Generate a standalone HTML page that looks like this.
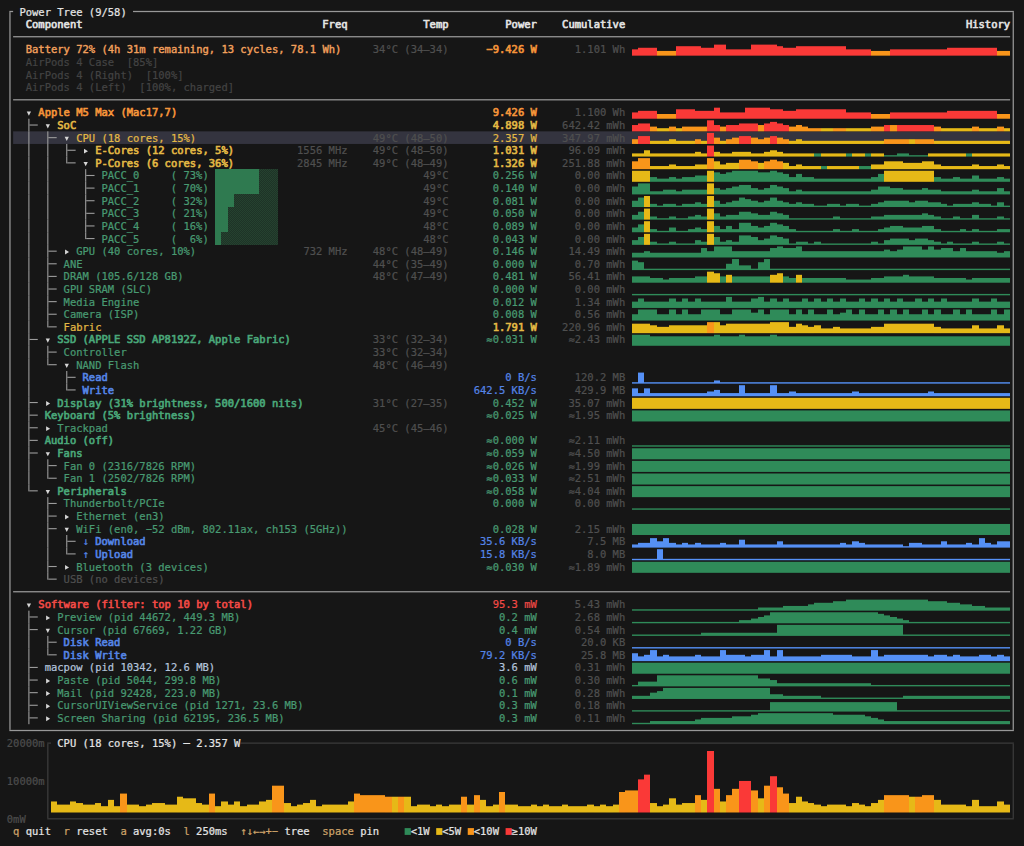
<!DOCTYPE html>
<html><head><meta charset="utf-8"><title>macpow</title>
<style>
html,body{margin:0;padding:0;background:#161616;}
body{width:1024px;height:846px;position:relative;overflow:hidden;
font-family:"DejaVu Sans Mono","Liberation Mono",monospace;font-size:10.49px;line-height:12.614px;}
svg{position:absolute;left:0;top:0;}
#t span{position:absolute;white-space:pre;height:12.614px;-webkit-text-stroke:0.22px currentColor;}
#t span.b{-webkit-text-stroke:0.62px currentColor;}
</style></head><body>
<svg width="1024" height="846" viewBox="0 0 1024 846">
<defs><pattern id="dz" width="2" height="2" patternUnits="userSpaceOnUse"><rect width="2" height="2" fill="#1e3327"/><rect width="1" height="1" fill="#25422f"/><rect x="1" y="1" width="1" height="1" fill="#25422f"/></pattern></defs>
<g>
<rect x="13.12" y="131.34" width="996.98" height="12.61" fill="#34343f"/>
<rect x="215.00" y="169.00" width="44.00" height="13.00" fill="#2f7a50"/>
<rect x="259.00" y="169.00" width="19.00" height="13.00" fill="url(#dz)"/>
<rect x="215.00" y="182.00" width="44.00" height="12.00" fill="#2f7a50"/>
<rect x="259.00" y="182.00" width="19.00" height="12.00" fill="url(#dz)"/>
<rect x="215.00" y="194.00" width="19.00" height="13.00" fill="#2f7a50"/>
<rect x="234.00" y="194.00" width="44.00" height="13.00" fill="url(#dz)"/>
<rect x="215.00" y="207.00" width="13.00" height="13.00" fill="#2f7a50"/>
<rect x="228.00" y="207.00" width="50.00" height="13.00" fill="url(#dz)"/>
<rect x="215.00" y="220.00" width="13.00" height="12.00" fill="#2f7a50"/>
<rect x="228.00" y="220.00" width="50.00" height="12.00" fill="url(#dz)"/>
<rect x="215.00" y="232.00" width="6.00" height="13.00" fill="#2f7a50"/>
<rect x="221.00" y="232.00" width="57.00" height="13.00" fill="url(#dz)"/>
<rect x="632.00" y="49.35" width="6.00" height="6.31" fill="#fa3937"/>
<rect x="638.00" y="47.77" width="19.00" height="7.88" fill="#fa3937"/>
<rect x="657.00" y="50.93" width="19.00" height="4.73" fill="#f9951a"/>
<rect x="676.00" y="46.20" width="25.00" height="9.46" fill="#fa3937"/>
<rect x="701.00" y="47.77" width="13.00" height="7.88" fill="#fa3937"/>
<rect x="714.00" y="44.62" width="12.00" height="11.04" fill="#fa3937"/>
<rect x="726.00" y="49.35" width="25.00" height="6.31" fill="#fa3937"/>
<rect x="751.00" y="44.62" width="26.00" height="11.04" fill="#fa3937"/>
<rect x="777.00" y="46.20" width="6.00" height="9.46" fill="#fa3937"/>
<rect x="783.00" y="47.77" width="13.00" height="7.88" fill="#fa3937"/>
<rect x="796.00" y="46.20" width="50.00" height="9.46" fill="#fa3937"/>
<rect x="846.00" y="49.35" width="25.00" height="6.31" fill="#fa3937"/>
<rect x="871.00" y="50.93" width="19.00" height="4.73" fill="#f9951a"/>
<rect x="890.00" y="49.35" width="57.00" height="6.31" fill="#fa3937"/>
<rect x="947.00" y="47.77" width="50.00" height="7.88" fill="#fa3937"/>
<rect x="997.00" y="50.93" width="13.00" height="4.73" fill="#f9951a"/>
<rect x="632.00" y="112.42" width="6.00" height="6.31" fill="#fa3937"/>
<rect x="638.00" y="110.84" width="19.00" height="7.88" fill="#fa3937"/>
<rect x="657.00" y="114.00" width="19.00" height="4.73" fill="#f9951a"/>
<rect x="676.00" y="109.27" width="19.00" height="9.46" fill="#fa3937"/>
<rect x="695.00" y="110.84" width="19.00" height="7.88" fill="#fa3937"/>
<rect x="714.00" y="107.69" width="6.00" height="11.04" fill="#fa3937"/>
<rect x="720.00" y="112.42" width="25.00" height="6.31" fill="#fa3937"/>
<rect x="745.00" y="107.69" width="25.00" height="11.04" fill="#fa3937"/>
<rect x="770.00" y="109.27" width="13.00" height="9.46" fill="#fa3937"/>
<rect x="783.00" y="110.84" width="13.00" height="7.88" fill="#fa3937"/>
<rect x="796.00" y="109.27" width="50.00" height="9.46" fill="#fa3937"/>
<rect x="846.00" y="112.42" width="25.00" height="6.31" fill="#fa3937"/>
<rect x="871.00" y="114.00" width="19.00" height="4.73" fill="#f9951a"/>
<rect x="890.00" y="112.42" width="57.00" height="6.31" fill="#fa3937"/>
<rect x="947.00" y="110.84" width="50.00" height="7.88" fill="#fa3937"/>
<rect x="997.00" y="114.00" width="13.00" height="4.73" fill="#f9951a"/>
<rect x="632.00" y="125.03" width="6.00" height="6.31" fill="#fa3937"/>
<rect x="638.00" y="123.46" width="12.00" height="7.88" fill="#fa3937"/>
<rect x="650.00" y="126.61" width="7.00" height="4.73" fill="#f9951a"/>
<rect x="657.00" y="128.19" width="12.00" height="3.15" fill="#e6b917"/>
<rect x="669.00" y="126.61" width="7.00" height="4.73" fill="#f9951a"/>
<rect x="676.00" y="128.19" width="6.00" height="3.15" fill="#e6b917"/>
<rect x="682.00" y="126.61" width="25.00" height="4.73" fill="#f9951a"/>
<rect x="707.00" y="120.30" width="7.00" height="11.04" fill="#fa3937"/>
<rect x="714.00" y="125.03" width="6.00" height="6.31" fill="#fa3937"/>
<rect x="720.00" y="126.61" width="6.00" height="4.73" fill="#f9951a"/>
<rect x="726.00" y="125.03" width="13.00" height="6.31" fill="#fa3937"/>
<rect x="739.00" y="123.46" width="19.00" height="7.88" fill="#fa3937"/>
<rect x="758.00" y="125.03" width="6.00" height="6.31" fill="#f9951a"/>
<rect x="764.00" y="123.46" width="6.00" height="7.88" fill="#fa3937"/>
<rect x="770.00" y="121.88" width="7.00" height="9.46" fill="#fa3937"/>
<rect x="777.00" y="123.46" width="6.00" height="7.88" fill="#fa3937"/>
<rect x="783.00" y="125.03" width="6.00" height="6.31" fill="#fa3937"/>
<rect x="789.00" y="126.61" width="7.00" height="4.73" fill="#f9951a"/>
<rect x="796.00" y="125.03" width="6.00" height="6.31" fill="#f9951a"/>
<rect x="802.00" y="126.61" width="6.00" height="4.73" fill="#f9951a"/>
<rect x="808.00" y="128.19" width="13.00" height="3.15" fill="#f9951a"/>
<rect x="821.00" y="128.19" width="12.00" height="3.15" fill="#e6b917"/>
<rect x="833.00" y="128.19" width="13.00" height="3.15" fill="#f9951a"/>
<rect x="846.00" y="128.19" width="25.00" height="3.15" fill="#e6b917"/>
<rect x="871.00" y="126.61" width="13.00" height="4.73" fill="#f9951a"/>
<rect x="884.00" y="125.03" width="6.00" height="6.31" fill="#fa3937"/>
<rect x="890.00" y="125.03" width="7.00" height="6.31" fill="#f9951a"/>
<rect x="897.00" y="125.03" width="37.00" height="6.31" fill="#fa3937"/>
<rect x="934.00" y="126.61" width="7.00" height="4.73" fill="#f9951a"/>
<rect x="941.00" y="128.19" width="31.00" height="3.15" fill="#e6b917"/>
<rect x="972.00" y="126.61" width="7.00" height="4.73" fill="#f9951a"/>
<rect x="979.00" y="128.19" width="18.00" height="3.15" fill="#e6b917"/>
<rect x="997.00" y="126.61" width="7.00" height="4.73" fill="#f9951a"/>
<rect x="1004.00" y="128.19" width="6.00" height="3.15" fill="#e6b917"/>
<rect x="632.00" y="139.22" width="6.00" height="4.73" fill="#f9951a"/>
<rect x="638.00" y="136.07" width="12.00" height="7.88" fill="#fa3937"/>
<rect x="650.00" y="140.80" width="19.00" height="3.15" fill="#e6b917"/>
<rect x="669.00" y="139.22" width="7.00" height="4.73" fill="#e6b917"/>
<rect x="676.00" y="140.80" width="19.00" height="3.15" fill="#e6b917"/>
<rect x="695.00" y="139.22" width="6.00" height="4.73" fill="#f9951a"/>
<rect x="701.00" y="140.80" width="6.00" height="3.15" fill="#e6b917"/>
<rect x="707.00" y="132.92" width="7.00" height="11.04" fill="#fa3937"/>
<rect x="714.00" y="137.65" width="6.00" height="6.31" fill="#f9951a"/>
<rect x="720.00" y="140.80" width="6.00" height="3.15" fill="#e6b917"/>
<rect x="726.00" y="139.22" width="6.00" height="4.73" fill="#f9951a"/>
<rect x="732.00" y="137.65" width="7.00" height="6.31" fill="#f9951a"/>
<rect x="739.00" y="136.07" width="12.00" height="7.88" fill="#fa3937"/>
<rect x="751.00" y="137.65" width="7.00" height="6.31" fill="#f9951a"/>
<rect x="758.00" y="139.22" width="6.00" height="4.73" fill="#f9951a"/>
<rect x="764.00" y="137.65" width="6.00" height="6.31" fill="#f9951a"/>
<rect x="770.00" y="136.07" width="7.00" height="7.88" fill="#fa3937"/>
<rect x="777.00" y="137.65" width="6.00" height="6.31" fill="#f9951a"/>
<rect x="783.00" y="139.22" width="6.00" height="4.73" fill="#f9951a"/>
<rect x="789.00" y="140.80" width="7.00" height="3.15" fill="#e6b917"/>
<rect x="796.00" y="139.22" width="6.00" height="4.73" fill="#e6b917"/>
<rect x="802.00" y="140.80" width="82.00" height="3.15" fill="#e6b917"/>
<rect x="884.00" y="139.22" width="25.00" height="4.73" fill="#f9951a"/>
<rect x="909.00" y="139.22" width="6.00" height="4.73" fill="#e6b917"/>
<rect x="915.00" y="139.22" width="19.00" height="4.73" fill="#f9951a"/>
<rect x="934.00" y="140.80" width="76.00" height="3.15" fill="#e6b917"/>
<rect x="632.00" y="153.41" width="12.00" height="3.15" fill="#e6b917"/>
<rect x="644.00" y="150.26" width="6.00" height="6.31" fill="#e6b917"/>
<rect x="650.00" y="153.41" width="45.00" height="3.15" fill="#e6b917"/>
<rect x="695.00" y="151.84" width="6.00" height="4.73" fill="#e6b917"/>
<rect x="701.00" y="153.41" width="6.00" height="3.15" fill="#e6b917"/>
<rect x="707.00" y="145.53" width="7.00" height="11.04" fill="#fa3937"/>
<rect x="714.00" y="151.84" width="6.00" height="4.73" fill="#e6b917"/>
<rect x="720.00" y="153.41" width="12.00" height="3.15" fill="#e6b917"/>
<rect x="732.00" y="151.84" width="19.00" height="4.73" fill="#e6b917"/>
<rect x="751.00" y="153.41" width="13.00" height="3.15" fill="#e6b917"/>
<rect x="764.00" y="151.84" width="6.00" height="4.73" fill="#e6b917"/>
<rect x="770.00" y="150.26" width="7.00" height="6.31" fill="#e6b917"/>
<rect x="777.00" y="151.84" width="6.00" height="4.73" fill="#e6b917"/>
<rect x="783.00" y="153.41" width="31.00" height="3.15" fill="#e6b917"/>
<rect x="814.00" y="153.41" width="7.00" height="3.15" fill="#2f8b59"/>
<rect x="821.00" y="153.41" width="25.00" height="3.15" fill="#e6b917"/>
<rect x="846.00" y="153.41" width="6.00" height="3.15" fill="#2f8b59"/>
<rect x="852.00" y="153.41" width="13.00" height="3.15" fill="#e6b917"/>
<rect x="865.00" y="153.41" width="6.00" height="3.15" fill="#2f8b59"/>
<rect x="871.00" y="153.41" width="13.00" height="3.15" fill="#e6b917"/>
<rect x="884.00" y="155.17" width="13.00" height="1.40" fill="#2f8b59"/>
<rect x="897.00" y="153.41" width="12.00" height="3.15" fill="#2f8b59"/>
<rect x="909.00" y="155.17" width="19.00" height="1.40" fill="#2f8b59"/>
<rect x="928.00" y="153.41" width="38.00" height="3.15" fill="#e6b917"/>
<rect x="966.00" y="153.41" width="6.00" height="3.15" fill="#2f8b59"/>
<rect x="972.00" y="153.41" width="38.00" height="3.15" fill="#e6b917"/>
<rect x="632.00" y="161.30" width="6.00" height="7.88" fill="#f9951a"/>
<rect x="638.00" y="158.14" width="12.00" height="11.04" fill="#f9951a"/>
<rect x="650.00" y="166.03" width="19.00" height="3.15" fill="#e6b917"/>
<rect x="669.00" y="164.45" width="7.00" height="4.73" fill="#e6b917"/>
<rect x="676.00" y="166.03" width="19.00" height="3.15" fill="#e6b917"/>
<rect x="695.00" y="164.45" width="12.00" height="4.73" fill="#e6b917"/>
<rect x="707.00" y="158.14" width="7.00" height="11.04" fill="#f9951a"/>
<rect x="714.00" y="161.30" width="6.00" height="7.88" fill="#e6b917"/>
<rect x="720.00" y="164.45" width="6.00" height="4.73" fill="#e6b917"/>
<rect x="726.00" y="162.88" width="13.00" height="6.31" fill="#e6b917"/>
<rect x="739.00" y="159.72" width="12.00" height="9.46" fill="#f9951a"/>
<rect x="751.00" y="161.30" width="7.00" height="7.88" fill="#f9951a"/>
<rect x="758.00" y="162.88" width="6.00" height="6.31" fill="#e6b917"/>
<rect x="764.00" y="161.30" width="6.00" height="7.88" fill="#f9951a"/>
<rect x="770.00" y="159.72" width="7.00" height="9.46" fill="#f9951a"/>
<rect x="777.00" y="161.30" width="6.00" height="7.88" fill="#f9951a"/>
<rect x="783.00" y="162.88" width="6.00" height="6.31" fill="#e6b917"/>
<rect x="789.00" y="166.03" width="7.00" height="3.15" fill="#e6b917"/>
<rect x="796.00" y="164.45" width="6.00" height="4.73" fill="#e6b917"/>
<rect x="802.00" y="166.03" width="19.00" height="3.15" fill="#e6b917"/>
<rect x="821.00" y="166.03" width="6.00" height="3.15" fill="#2f8b59"/>
<rect x="827.00" y="166.03" width="32.00" height="3.15" fill="#e6b917"/>
<rect x="859.00" y="166.03" width="12.00" height="3.15" fill="#2f8b59"/>
<rect x="871.00" y="164.45" width="13.00" height="4.73" fill="#e6b917"/>
<rect x="884.00" y="161.30" width="19.00" height="7.88" fill="#e6b917"/>
<rect x="903.00" y="162.88" width="19.00" height="6.31" fill="#e6b917"/>
<rect x="922.00" y="161.30" width="12.00" height="7.88" fill="#e6b917"/>
<rect x="934.00" y="164.45" width="7.00" height="4.73" fill="#e6b917"/>
<rect x="941.00" y="166.03" width="31.00" height="3.15" fill="#e6b917"/>
<rect x="972.00" y="164.45" width="7.00" height="4.73" fill="#e6b917"/>
<rect x="979.00" y="166.03" width="18.00" height="3.15" fill="#e6b917"/>
<rect x="997.00" y="164.45" width="7.00" height="4.73" fill="#e6b917"/>
<rect x="1004.00" y="166.03" width="6.00" height="3.15" fill="#e6b917"/>
<rect x="632.00" y="170.76" width="18.00" height="11.04" fill="#e6b917"/>
<rect x="650.00" y="177.07" width="7.00" height="4.73" fill="#2f8b59"/>
<rect x="657.00" y="178.64" width="12.00" height="3.15" fill="#2f8b59"/>
<rect x="669.00" y="177.07" width="7.00" height="4.73" fill="#2f8b59"/>
<rect x="676.00" y="178.64" width="6.00" height="3.15" fill="#2f8b59"/>
<rect x="682.00" y="177.07" width="13.00" height="4.73" fill="#2f8b59"/>
<rect x="695.00" y="175.49" width="12.00" height="6.31" fill="#2f8b59"/>
<rect x="707.00" y="170.76" width="7.00" height="11.04" fill="#e6b917"/>
<rect x="714.00" y="172.34" width="6.00" height="9.46" fill="#2f8b59"/>
<rect x="720.00" y="173.91" width="6.00" height="7.88" fill="#2f8b59"/>
<rect x="726.00" y="172.34" width="6.00" height="9.46" fill="#2f8b59"/>
<rect x="732.00" y="170.76" width="26.00" height="11.04" fill="#2f8b59"/>
<rect x="758.00" y="172.34" width="12.00" height="9.46" fill="#2f8b59"/>
<rect x="770.00" y="170.76" width="7.00" height="11.04" fill="#2f8b59"/>
<rect x="777.00" y="172.34" width="6.00" height="9.46" fill="#2f8b59"/>
<rect x="783.00" y="173.91" width="6.00" height="7.88" fill="#2f8b59"/>
<rect x="789.00" y="177.07" width="7.00" height="4.73" fill="#2f8b59"/>
<rect x="796.00" y="173.91" width="6.00" height="7.88" fill="#2f8b59"/>
<rect x="802.00" y="177.07" width="12.00" height="4.73" fill="#2f8b59"/>
<rect x="814.00" y="178.64" width="57.00" height="3.15" fill="#2f8b59"/>
<rect x="871.00" y="177.07" width="7.00" height="4.73" fill="#2f8b59"/>
<rect x="878.00" y="173.91" width="6.00" height="7.88" fill="#2f8b59"/>
<rect x="884.00" y="170.76" width="50.00" height="11.04" fill="#e6b917"/>
<rect x="934.00" y="177.07" width="7.00" height="4.73" fill="#2f8b59"/>
<rect x="941.00" y="178.64" width="12.00" height="3.15" fill="#2f8b59"/>
<rect x="953.00" y="177.07" width="7.00" height="4.73" fill="#2f8b59"/>
<rect x="960.00" y="178.64" width="12.00" height="3.15" fill="#2f8b59"/>
<rect x="972.00" y="175.49" width="7.00" height="6.31" fill="#2f8b59"/>
<rect x="979.00" y="178.64" width="18.00" height="3.15" fill="#2f8b59"/>
<rect x="997.00" y="177.07" width="7.00" height="4.73" fill="#2f8b59"/>
<rect x="1004.00" y="178.64" width="6.00" height="3.15" fill="#2f8b59"/>
<rect x="632.00" y="186.53" width="6.00" height="7.88" fill="#2f8b59"/>
<rect x="638.00" y="183.37" width="12.00" height="11.04" fill="#2f8b59"/>
<rect x="650.00" y="191.26" width="13.00" height="3.15" fill="#2f8b59"/>
<rect x="663.00" y="189.68" width="13.00" height="4.73" fill="#2f8b59"/>
<rect x="676.00" y="191.26" width="6.00" height="3.15" fill="#2f8b59"/>
<rect x="682.00" y="189.68" width="25.00" height="4.73" fill="#2f8b59"/>
<rect x="707.00" y="183.37" width="7.00" height="11.04" fill="#e6b917"/>
<rect x="714.00" y="188.10" width="6.00" height="6.31" fill="#2f8b59"/>
<rect x="720.00" y="189.68" width="6.00" height="4.73" fill="#2f8b59"/>
<rect x="726.00" y="188.10" width="6.00" height="6.31" fill="#2f8b59"/>
<rect x="732.00" y="186.53" width="7.00" height="7.88" fill="#2f8b59"/>
<rect x="739.00" y="184.95" width="12.00" height="9.46" fill="#2f8b59"/>
<rect x="751.00" y="188.10" width="7.00" height="6.31" fill="#2f8b59"/>
<rect x="758.00" y="189.68" width="6.00" height="4.73" fill="#2f8b59"/>
<rect x="764.00" y="188.10" width="6.00" height="6.31" fill="#2f8b59"/>
<rect x="770.00" y="184.95" width="7.00" height="9.46" fill="#2f8b59"/>
<rect x="777.00" y="186.53" width="6.00" height="7.88" fill="#2f8b59"/>
<rect x="783.00" y="188.10" width="6.00" height="6.31" fill="#2f8b59"/>
<rect x="789.00" y="191.26" width="7.00" height="3.15" fill="#2f8b59"/>
<rect x="796.00" y="189.68" width="6.00" height="4.73" fill="#2f8b59"/>
<rect x="802.00" y="191.26" width="69.00" height="3.15" fill="#2f8b59"/>
<rect x="871.00" y="189.68" width="7.00" height="4.73" fill="#2f8b59"/>
<rect x="878.00" y="186.53" width="12.00" height="7.88" fill="#2f8b59"/>
<rect x="890.00" y="188.10" width="13.00" height="6.31" fill="#2f8b59"/>
<rect x="903.00" y="189.68" width="19.00" height="4.73" fill="#2f8b59"/>
<rect x="922.00" y="188.10" width="6.00" height="6.31" fill="#2f8b59"/>
<rect x="928.00" y="189.68" width="13.00" height="4.73" fill="#2f8b59"/>
<rect x="941.00" y="191.26" width="31.00" height="3.15" fill="#2f8b59"/>
<rect x="972.00" y="189.68" width="7.00" height="4.73" fill="#2f8b59"/>
<rect x="979.00" y="191.26" width="18.00" height="3.15" fill="#2f8b59"/>
<rect x="997.00" y="188.10" width="7.00" height="6.31" fill="#2f8b59"/>
<rect x="1004.00" y="191.26" width="6.00" height="3.15" fill="#2f8b59"/>
<rect x="632.00" y="200.72" width="6.00" height="6.31" fill="#2f8b59"/>
<rect x="638.00" y="197.56" width="6.00" height="9.46" fill="#2f8b59"/>
<rect x="644.00" y="195.99" width="6.00" height="11.04" fill="#e6b917"/>
<rect x="650.00" y="203.87" width="7.00" height="3.15" fill="#2f8b59"/>
<rect x="657.00" y="205.62" width="6.00" height="1.40" fill="#2f8b59"/>
<rect x="663.00" y="203.87" width="13.00" height="3.15" fill="#2f8b59"/>
<rect x="676.00" y="205.62" width="6.00" height="1.40" fill="#2f8b59"/>
<rect x="682.00" y="203.87" width="13.00" height="3.15" fill="#2f8b59"/>
<rect x="695.00" y="202.29" width="6.00" height="4.73" fill="#2f8b59"/>
<rect x="701.00" y="203.87" width="6.00" height="3.15" fill="#2f8b59"/>
<rect x="707.00" y="195.99" width="7.00" height="11.04" fill="#e6b917"/>
<rect x="714.00" y="200.72" width="6.00" height="6.31" fill="#2f8b59"/>
<rect x="720.00" y="203.87" width="6.00" height="3.15" fill="#2f8b59"/>
<rect x="726.00" y="202.29" width="6.00" height="4.73" fill="#2f8b59"/>
<rect x="732.00" y="200.72" width="7.00" height="6.31" fill="#2f8b59"/>
<rect x="739.00" y="197.56" width="6.00" height="9.46" fill="#2f8b59"/>
<rect x="745.00" y="199.14" width="6.00" height="7.88" fill="#2f8b59"/>
<rect x="751.00" y="200.72" width="7.00" height="6.31" fill="#2f8b59"/>
<rect x="758.00" y="202.29" width="6.00" height="4.73" fill="#2f8b59"/>
<rect x="764.00" y="200.72" width="6.00" height="6.31" fill="#2f8b59"/>
<rect x="770.00" y="197.56" width="7.00" height="9.46" fill="#2f8b59"/>
<rect x="777.00" y="200.72" width="6.00" height="6.31" fill="#2f8b59"/>
<rect x="783.00" y="202.29" width="6.00" height="4.73" fill="#2f8b59"/>
<rect x="789.00" y="203.87" width="7.00" height="3.15" fill="#2f8b59"/>
<rect x="796.00" y="202.29" width="6.00" height="4.73" fill="#2f8b59"/>
<rect x="802.00" y="203.87" width="12.00" height="3.15" fill="#2f8b59"/>
<rect x="814.00" y="205.62" width="13.00" height="1.40" fill="#2f8b59"/>
<rect x="827.00" y="203.87" width="13.00" height="3.15" fill="#2f8b59"/>
<rect x="840.00" y="205.62" width="6.00" height="1.40" fill="#2f8b59"/>
<rect x="846.00" y="203.87" width="13.00" height="3.15" fill="#2f8b59"/>
<rect x="859.00" y="205.62" width="12.00" height="1.40" fill="#2f8b59"/>
<rect x="871.00" y="203.87" width="7.00" height="3.15" fill="#2f8b59"/>
<rect x="878.00" y="202.29" width="6.00" height="4.73" fill="#2f8b59"/>
<rect x="884.00" y="200.72" width="25.00" height="6.31" fill="#2f8b59"/>
<rect x="909.00" y="202.29" width="6.00" height="4.73" fill="#2f8b59"/>
<rect x="915.00" y="200.72" width="13.00" height="6.31" fill="#2f8b59"/>
<rect x="928.00" y="202.29" width="13.00" height="4.73" fill="#2f8b59"/>
<rect x="941.00" y="203.87" width="6.00" height="3.15" fill="#2f8b59"/>
<rect x="947.00" y="205.62" width="6.00" height="1.40" fill="#2f8b59"/>
<rect x="953.00" y="203.87" width="19.00" height="3.15" fill="#2f8b59"/>
<rect x="972.00" y="202.29" width="7.00" height="4.73" fill="#2f8b59"/>
<rect x="979.00" y="203.87" width="12.00" height="3.15" fill="#2f8b59"/>
<rect x="991.00" y="205.62" width="6.00" height="1.40" fill="#2f8b59"/>
<rect x="997.00" y="202.29" width="7.00" height="4.73" fill="#2f8b59"/>
<rect x="1004.00" y="205.62" width="6.00" height="1.40" fill="#2f8b59"/>
<rect x="632.00" y="214.91" width="6.00" height="4.73" fill="#2f8b59"/>
<rect x="638.00" y="211.75" width="6.00" height="7.88" fill="#2f8b59"/>
<rect x="644.00" y="208.60" width="6.00" height="11.04" fill="#e6b917"/>
<rect x="650.00" y="216.48" width="7.00" height="3.15" fill="#2f8b59"/>
<rect x="657.00" y="218.24" width="12.00" height="1.40" fill="#2f8b59"/>
<rect x="669.00" y="216.48" width="7.00" height="3.15" fill="#2f8b59"/>
<rect x="676.00" y="218.24" width="12.00" height="1.40" fill="#2f8b59"/>
<rect x="688.00" y="216.48" width="7.00" height="3.15" fill="#2f8b59"/>
<rect x="695.00" y="214.91" width="6.00" height="4.73" fill="#2f8b59"/>
<rect x="701.00" y="216.48" width="6.00" height="3.15" fill="#2f8b59"/>
<rect x="707.00" y="208.60" width="7.00" height="11.04" fill="#e6b917"/>
<rect x="714.00" y="213.33" width="6.00" height="6.31" fill="#2f8b59"/>
<rect x="720.00" y="216.48" width="6.00" height="3.15" fill="#2f8b59"/>
<rect x="726.00" y="214.91" width="13.00" height="4.73" fill="#2f8b59"/>
<rect x="739.00" y="211.75" width="12.00" height="7.88" fill="#2f8b59"/>
<rect x="751.00" y="213.33" width="7.00" height="6.31" fill="#2f8b59"/>
<rect x="758.00" y="214.91" width="12.00" height="4.73" fill="#2f8b59"/>
<rect x="770.00" y="211.75" width="7.00" height="7.88" fill="#2f8b59"/>
<rect x="777.00" y="213.33" width="6.00" height="6.31" fill="#2f8b59"/>
<rect x="783.00" y="214.91" width="6.00" height="4.73" fill="#2f8b59"/>
<rect x="789.00" y="218.24" width="44.00" height="1.40" fill="#2f8b59"/>
<rect x="833.00" y="216.48" width="7.00" height="3.15" fill="#2f8b59"/>
<rect x="840.00" y="218.24" width="31.00" height="1.40" fill="#2f8b59"/>
<rect x="871.00" y="216.48" width="13.00" height="3.15" fill="#2f8b59"/>
<rect x="884.00" y="214.91" width="38.00" height="4.73" fill="#2f8b59"/>
<rect x="922.00" y="213.33" width="6.00" height="6.31" fill="#2f8b59"/>
<rect x="928.00" y="214.91" width="6.00" height="4.73" fill="#2f8b59"/>
<rect x="934.00" y="216.48" width="7.00" height="3.15" fill="#2f8b59"/>
<rect x="941.00" y="218.24" width="12.00" height="1.40" fill="#2f8b59"/>
<rect x="953.00" y="216.48" width="7.00" height="3.15" fill="#2f8b59"/>
<rect x="960.00" y="218.24" width="12.00" height="1.40" fill="#2f8b59"/>
<rect x="972.00" y="214.91" width="7.00" height="4.73" fill="#2f8b59"/>
<rect x="979.00" y="218.24" width="18.00" height="1.40" fill="#2f8b59"/>
<rect x="997.00" y="216.48" width="7.00" height="3.15" fill="#2f8b59"/>
<rect x="1004.00" y="218.24" width="6.00" height="1.40" fill="#2f8b59"/>
<rect x="632.00" y="227.52" width="6.00" height="4.73" fill="#2f8b59"/>
<rect x="638.00" y="224.37" width="6.00" height="7.88" fill="#2f8b59"/>
<rect x="644.00" y="221.21" width="6.00" height="11.04" fill="#e6b917"/>
<rect x="650.00" y="229.10" width="7.00" height="3.15" fill="#2f8b59"/>
<rect x="657.00" y="230.85" width="12.00" height="1.40" fill="#2f8b59"/>
<rect x="669.00" y="227.52" width="7.00" height="4.73" fill="#2f8b59"/>
<rect x="676.00" y="230.85" width="12.00" height="1.40" fill="#2f8b59"/>
<rect x="688.00" y="229.10" width="7.00" height="3.15" fill="#2f8b59"/>
<rect x="695.00" y="227.52" width="6.00" height="4.73" fill="#2f8b59"/>
<rect x="701.00" y="229.10" width="6.00" height="3.15" fill="#2f8b59"/>
<rect x="707.00" y="221.21" width="7.00" height="11.04" fill="#e6b917"/>
<rect x="714.00" y="225.95" width="6.00" height="6.31" fill="#2f8b59"/>
<rect x="720.00" y="229.10" width="6.00" height="3.15" fill="#2f8b59"/>
<rect x="726.00" y="225.95" width="6.00" height="6.31" fill="#2f8b59"/>
<rect x="732.00" y="229.10" width="7.00" height="3.15" fill="#2f8b59"/>
<rect x="739.00" y="222.79" width="12.00" height="9.46" fill="#2f8b59"/>
<rect x="751.00" y="225.95" width="7.00" height="6.31" fill="#2f8b59"/>
<rect x="758.00" y="227.52" width="6.00" height="4.73" fill="#2f8b59"/>
<rect x="764.00" y="225.95" width="6.00" height="6.31" fill="#2f8b59"/>
<rect x="770.00" y="222.79" width="7.00" height="9.46" fill="#2f8b59"/>
<rect x="777.00" y="224.37" width="6.00" height="7.88" fill="#2f8b59"/>
<rect x="783.00" y="225.95" width="6.00" height="6.31" fill="#2f8b59"/>
<rect x="789.00" y="229.10" width="7.00" height="3.15" fill="#2f8b59"/>
<rect x="796.00" y="230.85" width="37.00" height="1.40" fill="#2f8b59"/>
<rect x="833.00" y="229.10" width="7.00" height="3.15" fill="#2f8b59"/>
<rect x="840.00" y="230.85" width="12.00" height="1.40" fill="#2f8b59"/>
<rect x="852.00" y="229.10" width="7.00" height="3.15" fill="#2f8b59"/>
<rect x="859.00" y="230.85" width="19.00" height="1.40" fill="#2f8b59"/>
<rect x="878.00" y="229.10" width="6.00" height="3.15" fill="#2f8b59"/>
<rect x="884.00" y="227.52" width="6.00" height="4.73" fill="#2f8b59"/>
<rect x="890.00" y="225.95" width="13.00" height="6.31" fill="#2f8b59"/>
<rect x="903.00" y="227.52" width="19.00" height="4.73" fill="#2f8b59"/>
<rect x="922.00" y="225.95" width="12.00" height="6.31" fill="#2f8b59"/>
<rect x="934.00" y="229.10" width="7.00" height="3.15" fill="#2f8b59"/>
<rect x="941.00" y="230.85" width="19.00" height="1.40" fill="#2f8b59"/>
<rect x="960.00" y="229.10" width="6.00" height="3.15" fill="#2f8b59"/>
<rect x="966.00" y="230.85" width="6.00" height="1.40" fill="#2f8b59"/>
<rect x="972.00" y="229.10" width="7.00" height="3.15" fill="#2f8b59"/>
<rect x="979.00" y="230.85" width="18.00" height="1.40" fill="#2f8b59"/>
<rect x="997.00" y="229.10" width="13.00" height="3.15" fill="#2f8b59"/>
<rect x="632.00" y="240.14" width="6.00" height="4.73" fill="#2f8b59"/>
<rect x="638.00" y="236.98" width="6.00" height="7.88" fill="#2f8b59"/>
<rect x="644.00" y="233.83" width="6.00" height="11.04" fill="#e6b917"/>
<rect x="650.00" y="241.71" width="7.00" height="3.15" fill="#2f8b59"/>
<rect x="657.00" y="243.47" width="12.00" height="1.40" fill="#2f8b59"/>
<rect x="669.00" y="241.71" width="7.00" height="3.15" fill="#2f8b59"/>
<rect x="676.00" y="243.47" width="19.00" height="1.40" fill="#2f8b59"/>
<rect x="695.00" y="240.14" width="6.00" height="4.73" fill="#2f8b59"/>
<rect x="701.00" y="241.71" width="6.00" height="3.15" fill="#2f8b59"/>
<rect x="707.00" y="233.83" width="7.00" height="11.04" fill="#e6b917"/>
<rect x="714.00" y="236.98" width="6.00" height="7.88" fill="#2f8b59"/>
<rect x="720.00" y="241.71" width="6.00" height="3.15" fill="#2f8b59"/>
<rect x="726.00" y="240.14" width="6.00" height="4.73" fill="#2f8b59"/>
<rect x="732.00" y="241.71" width="7.00" height="3.15" fill="#2f8b59"/>
<rect x="739.00" y="235.41" width="12.00" height="9.46" fill="#2f8b59"/>
<rect x="751.00" y="236.98" width="7.00" height="7.88" fill="#2f8b59"/>
<rect x="758.00" y="240.14" width="6.00" height="4.73" fill="#2f8b59"/>
<rect x="764.00" y="238.56" width="6.00" height="6.31" fill="#2f8b59"/>
<rect x="770.00" y="235.41" width="7.00" height="9.46" fill="#2f8b59"/>
<rect x="777.00" y="236.98" width="6.00" height="7.88" fill="#2f8b59"/>
<rect x="783.00" y="238.56" width="6.00" height="6.31" fill="#2f8b59"/>
<rect x="789.00" y="243.47" width="7.00" height="1.40" fill="#2f8b59"/>
<rect x="796.00" y="241.71" width="12.00" height="3.15" fill="#2f8b59"/>
<rect x="808.00" y="243.47" width="6.00" height="1.40" fill="#2f8b59"/>
<rect x="814.00" y="241.71" width="7.00" height="3.15" fill="#2f8b59"/>
<rect x="821.00" y="243.47" width="50.00" height="1.40" fill="#2f8b59"/>
<rect x="871.00" y="241.71" width="7.00" height="3.15" fill="#2f8b59"/>
<rect x="878.00" y="243.47" width="6.00" height="1.40" fill="#2f8b59"/>
<rect x="884.00" y="240.14" width="6.00" height="4.73" fill="#2f8b59"/>
<rect x="890.00" y="238.56" width="19.00" height="6.31" fill="#2f8b59"/>
<rect x="909.00" y="240.14" width="6.00" height="4.73" fill="#2f8b59"/>
<rect x="915.00" y="238.56" width="13.00" height="6.31" fill="#2f8b59"/>
<rect x="928.00" y="240.14" width="6.00" height="4.73" fill="#2f8b59"/>
<rect x="934.00" y="241.71" width="7.00" height="3.15" fill="#2f8b59"/>
<rect x="941.00" y="243.47" width="6.00" height="1.40" fill="#2f8b59"/>
<rect x="947.00" y="241.71" width="6.00" height="3.15" fill="#2f8b59"/>
<rect x="953.00" y="243.47" width="19.00" height="1.40" fill="#2f8b59"/>
<rect x="972.00" y="241.71" width="7.00" height="3.15" fill="#2f8b59"/>
<rect x="979.00" y="243.47" width="18.00" height="1.40" fill="#2f8b59"/>
<rect x="997.00" y="241.71" width="7.00" height="3.15" fill="#2f8b59"/>
<rect x="1004.00" y="243.47" width="6.00" height="1.40" fill="#2f8b59"/>
<rect x="632.00" y="252.75" width="12.00" height="4.73" fill="#2f8b59"/>
<rect x="644.00" y="251.17" width="6.00" height="6.31" fill="#2f8b59"/>
<rect x="650.00" y="252.75" width="51.00" height="4.73" fill="#2f8b59"/>
<rect x="701.00" y="248.02" width="6.00" height="9.46" fill="#2f8b59"/>
<rect x="707.00" y="251.17" width="7.00" height="6.31" fill="#2f8b59"/>
<rect x="714.00" y="246.44" width="18.00" height="11.04" fill="#2f8b59"/>
<rect x="732.00" y="251.17" width="38.00" height="6.31" fill="#2f8b59"/>
<rect x="770.00" y="248.02" width="7.00" height="9.46" fill="#2f8b59"/>
<rect x="777.00" y="246.44" width="6.00" height="11.04" fill="#2f8b59"/>
<rect x="783.00" y="248.02" width="13.00" height="9.46" fill="#2f8b59"/>
<rect x="796.00" y="246.44" width="6.00" height="11.04" fill="#2f8b59"/>
<rect x="802.00" y="251.17" width="82.00" height="6.31" fill="#2f8b59"/>
<rect x="884.00" y="249.60" width="6.00" height="7.88" fill="#2f8b59"/>
<rect x="890.00" y="251.17" width="7.00" height="6.31" fill="#2f8b59"/>
<rect x="897.00" y="249.60" width="6.00" height="7.88" fill="#2f8b59"/>
<rect x="903.00" y="246.44" width="19.00" height="11.04" fill="#2f8b59"/>
<rect x="922.00" y="249.60" width="6.00" height="7.88" fill="#2f8b59"/>
<rect x="928.00" y="246.44" width="6.00" height="11.04" fill="#2f8b59"/>
<rect x="934.00" y="249.60" width="7.00" height="7.88" fill="#2f8b59"/>
<rect x="941.00" y="248.02" width="12.00" height="9.46" fill="#2f8b59"/>
<rect x="953.00" y="251.17" width="7.00" height="6.31" fill="#2f8b59"/>
<rect x="960.00" y="248.02" width="6.00" height="9.46" fill="#2f8b59"/>
<rect x="966.00" y="251.17" width="31.00" height="6.31" fill="#2f8b59"/>
<rect x="997.00" y="252.75" width="7.00" height="4.73" fill="#2f8b59"/>
<rect x="1004.00" y="251.17" width="6.00" height="6.31" fill="#2f8b59"/>
<rect x="632.00" y="260.63" width="6.00" height="9.46" fill="#2f8b59"/>
<rect x="638.00" y="262.21" width="6.00" height="7.88" fill="#2f8b59"/>
<rect x="644.00" y="268.69" width="82.00" height="1.40" fill="#2f8b59"/>
<rect x="726.00" y="263.79" width="6.00" height="6.31" fill="#2f8b59"/>
<rect x="732.00" y="259.06" width="7.00" height="11.04" fill="#2f8b59"/>
<rect x="739.00" y="265.36" width="12.00" height="4.73" fill="#2f8b59"/>
<rect x="751.00" y="268.69" width="7.00" height="1.40" fill="#2f8b59"/>
<rect x="758.00" y="262.21" width="6.00" height="7.88" fill="#2f8b59"/>
<rect x="764.00" y="259.06" width="6.00" height="11.04" fill="#2f8b59"/>
<rect x="770.00" y="268.69" width="240.00" height="1.40" fill="#2f8b59"/>
<rect x="632.00" y="276.40" width="18.00" height="6.31" fill="#2f8b59"/>
<rect x="650.00" y="277.98" width="13.00" height="4.73" fill="#2f8b59"/>
<rect x="663.00" y="279.55" width="6.00" height="3.15" fill="#2f8b59"/>
<rect x="669.00" y="277.98" width="26.00" height="4.73" fill="#2f8b59"/>
<rect x="695.00" y="276.40" width="12.00" height="6.31" fill="#2f8b59"/>
<rect x="707.00" y="271.67" width="7.00" height="11.04" fill="#e6b917"/>
<rect x="714.00" y="273.25" width="6.00" height="9.46" fill="#e6b917"/>
<rect x="720.00" y="276.40" width="6.00" height="6.31" fill="#2f8b59"/>
<rect x="726.00" y="274.82" width="6.00" height="7.88" fill="#e6b917"/>
<rect x="732.00" y="276.40" width="38.00" height="6.31" fill="#2f8b59"/>
<rect x="770.00" y="274.82" width="7.00" height="7.88" fill="#e6b917"/>
<rect x="777.00" y="273.25" width="6.00" height="9.46" fill="#e6b917"/>
<rect x="783.00" y="276.40" width="6.00" height="6.31" fill="#2f8b59"/>
<rect x="789.00" y="277.98" width="7.00" height="4.73" fill="#2f8b59"/>
<rect x="796.00" y="274.82" width="6.00" height="7.88" fill="#e6b917"/>
<rect x="802.00" y="277.98" width="44.00" height="4.73" fill="#2f8b59"/>
<rect x="846.00" y="279.55" width="25.00" height="3.15" fill="#2f8b59"/>
<rect x="871.00" y="277.98" width="13.00" height="4.73" fill="#2f8b59"/>
<rect x="884.00" y="276.40" width="19.00" height="6.31" fill="#2f8b59"/>
<rect x="903.00" y="274.82" width="6.00" height="7.88" fill="#2f8b59"/>
<rect x="909.00" y="276.40" width="25.00" height="6.31" fill="#2f8b59"/>
<rect x="934.00" y="277.98" width="32.00" height="4.73" fill="#2f8b59"/>
<rect x="966.00" y="279.55" width="6.00" height="3.15" fill="#2f8b59"/>
<rect x="972.00" y="277.98" width="38.00" height="4.73" fill="#2f8b59"/>
<rect x="632.00" y="293.92" width="378.00" height="1.40" fill="#2f8b59"/>
<rect x="632.00" y="301.63" width="6.00" height="6.31" fill="#2f8b59"/>
<rect x="638.00" y="298.48" width="6.00" height="9.46" fill="#2f8b59"/>
<rect x="644.00" y="301.63" width="25.00" height="6.31" fill="#2f8b59"/>
<rect x="669.00" y="298.48" width="7.00" height="9.46" fill="#2f8b59"/>
<rect x="676.00" y="301.63" width="6.00" height="6.31" fill="#2f8b59"/>
<rect x="682.00" y="298.48" width="6.00" height="9.46" fill="#2f8b59"/>
<rect x="688.00" y="301.63" width="7.00" height="6.31" fill="#2f8b59"/>
<rect x="695.00" y="298.48" width="6.00" height="9.46" fill="#2f8b59"/>
<rect x="701.00" y="301.63" width="25.00" height="6.31" fill="#2f8b59"/>
<rect x="726.00" y="296.90" width="6.00" height="11.04" fill="#2f8b59"/>
<rect x="732.00" y="301.63" width="19.00" height="6.31" fill="#2f8b59"/>
<rect x="751.00" y="298.48" width="7.00" height="9.46" fill="#2f8b59"/>
<rect x="758.00" y="296.90" width="6.00" height="11.04" fill="#2f8b59"/>
<rect x="764.00" y="301.63" width="6.00" height="6.31" fill="#2f8b59"/>
<rect x="770.00" y="298.48" width="7.00" height="9.46" fill="#2f8b59"/>
<rect x="777.00" y="301.63" width="6.00" height="6.31" fill="#2f8b59"/>
<rect x="783.00" y="298.48" width="6.00" height="9.46" fill="#2f8b59"/>
<rect x="789.00" y="301.63" width="13.00" height="6.31" fill="#2f8b59"/>
<rect x="802.00" y="298.48" width="6.00" height="9.46" fill="#2f8b59"/>
<rect x="808.00" y="301.63" width="6.00" height="6.31" fill="#2f8b59"/>
<rect x="814.00" y="298.48" width="7.00" height="9.46" fill="#2f8b59"/>
<rect x="821.00" y="301.63" width="6.00" height="6.31" fill="#2f8b59"/>
<rect x="827.00" y="298.48" width="6.00" height="9.46" fill="#2f8b59"/>
<rect x="833.00" y="301.63" width="7.00" height="6.31" fill="#2f8b59"/>
<rect x="840.00" y="298.48" width="6.00" height="9.46" fill="#2f8b59"/>
<rect x="846.00" y="301.63" width="13.00" height="6.31" fill="#2f8b59"/>
<rect x="859.00" y="298.48" width="6.00" height="9.46" fill="#2f8b59"/>
<rect x="865.00" y="301.63" width="6.00" height="6.31" fill="#2f8b59"/>
<rect x="871.00" y="298.48" width="7.00" height="9.46" fill="#2f8b59"/>
<rect x="878.00" y="301.63" width="6.00" height="6.31" fill="#2f8b59"/>
<rect x="884.00" y="298.48" width="6.00" height="9.46" fill="#2f8b59"/>
<rect x="890.00" y="301.63" width="7.00" height="6.31" fill="#2f8b59"/>
<rect x="897.00" y="298.48" width="6.00" height="9.46" fill="#2f8b59"/>
<rect x="903.00" y="301.63" width="12.00" height="6.31" fill="#2f8b59"/>
<rect x="915.00" y="298.48" width="7.00" height="9.46" fill="#2f8b59"/>
<rect x="922.00" y="301.63" width="6.00" height="6.31" fill="#2f8b59"/>
<rect x="928.00" y="298.48" width="6.00" height="9.46" fill="#2f8b59"/>
<rect x="934.00" y="301.63" width="7.00" height="6.31" fill="#2f8b59"/>
<rect x="941.00" y="298.48" width="6.00" height="9.46" fill="#2f8b59"/>
<rect x="947.00" y="301.63" width="25.00" height="6.31" fill="#2f8b59"/>
<rect x="972.00" y="298.48" width="7.00" height="9.46" fill="#2f8b59"/>
<rect x="979.00" y="301.63" width="12.00" height="6.31" fill="#2f8b59"/>
<rect x="991.00" y="298.48" width="6.00" height="9.46" fill="#2f8b59"/>
<rect x="997.00" y="301.63" width="13.00" height="6.31" fill="#2f8b59"/>
<rect x="632.00" y="314.24" width="6.00" height="6.31" fill="#2f8b59"/>
<rect x="638.00" y="309.51" width="19.00" height="11.04" fill="#2f8b59"/>
<rect x="657.00" y="314.24" width="12.00" height="6.31" fill="#2f8b59"/>
<rect x="669.00" y="309.51" width="7.00" height="11.04" fill="#2f8b59"/>
<rect x="676.00" y="314.24" width="6.00" height="6.31" fill="#2f8b59"/>
<rect x="682.00" y="309.51" width="6.00" height="11.04" fill="#2f8b59"/>
<rect x="688.00" y="314.24" width="13.00" height="6.31" fill="#2f8b59"/>
<rect x="701.00" y="309.51" width="19.00" height="11.04" fill="#2f8b59"/>
<rect x="720.00" y="314.24" width="12.00" height="6.31" fill="#2f8b59"/>
<rect x="732.00" y="309.51" width="19.00" height="11.04" fill="#2f8b59"/>
<rect x="751.00" y="312.67" width="7.00" height="7.88" fill="#2f8b59"/>
<rect x="758.00" y="309.51" width="6.00" height="11.04" fill="#2f8b59"/>
<rect x="764.00" y="314.24" width="6.00" height="6.31" fill="#2f8b59"/>
<rect x="770.00" y="309.51" width="19.00" height="11.04" fill="#2f8b59"/>
<rect x="789.00" y="314.24" width="7.00" height="6.31" fill="#2f8b59"/>
<rect x="796.00" y="309.51" width="6.00" height="11.04" fill="#2f8b59"/>
<rect x="802.00" y="314.24" width="6.00" height="6.31" fill="#2f8b59"/>
<rect x="808.00" y="309.51" width="6.00" height="11.04" fill="#2f8b59"/>
<rect x="814.00" y="314.24" width="13.00" height="6.31" fill="#2f8b59"/>
<rect x="827.00" y="309.51" width="6.00" height="11.04" fill="#2f8b59"/>
<rect x="833.00" y="314.24" width="7.00" height="6.31" fill="#2f8b59"/>
<rect x="840.00" y="312.67" width="6.00" height="7.88" fill="#2f8b59"/>
<rect x="846.00" y="309.51" width="6.00" height="11.04" fill="#2f8b59"/>
<rect x="852.00" y="314.24" width="7.00" height="6.31" fill="#2f8b59"/>
<rect x="859.00" y="309.51" width="6.00" height="11.04" fill="#2f8b59"/>
<rect x="865.00" y="314.24" width="13.00" height="6.31" fill="#2f8b59"/>
<rect x="878.00" y="309.51" width="6.00" height="11.04" fill="#2f8b59"/>
<rect x="884.00" y="314.24" width="6.00" height="6.31" fill="#2f8b59"/>
<rect x="890.00" y="309.51" width="7.00" height="11.04" fill="#2f8b59"/>
<rect x="897.00" y="314.24" width="6.00" height="6.31" fill="#2f8b59"/>
<rect x="903.00" y="309.51" width="6.00" height="11.04" fill="#2f8b59"/>
<rect x="909.00" y="314.24" width="13.00" height="6.31" fill="#2f8b59"/>
<rect x="922.00" y="309.51" width="6.00" height="11.04" fill="#2f8b59"/>
<rect x="928.00" y="314.24" width="6.00" height="6.31" fill="#2f8b59"/>
<rect x="934.00" y="309.51" width="7.00" height="11.04" fill="#2f8b59"/>
<rect x="941.00" y="314.24" width="12.00" height="6.31" fill="#2f8b59"/>
<rect x="953.00" y="309.51" width="7.00" height="11.04" fill="#2f8b59"/>
<rect x="960.00" y="314.24" width="6.00" height="6.31" fill="#2f8b59"/>
<rect x="966.00" y="309.51" width="6.00" height="11.04" fill="#2f8b59"/>
<rect x="972.00" y="314.24" width="19.00" height="6.31" fill="#2f8b59"/>
<rect x="991.00" y="309.51" width="6.00" height="11.04" fill="#2f8b59"/>
<rect x="997.00" y="314.24" width="7.00" height="6.31" fill="#2f8b59"/>
<rect x="1004.00" y="309.51" width="6.00" height="11.04" fill="#2f8b59"/>
<rect x="632.00" y="323.70" width="18.00" height="9.46" fill="#e6b917"/>
<rect x="650.00" y="325.28" width="7.00" height="7.88" fill="#e6b917"/>
<rect x="657.00" y="326.86" width="12.00" height="6.31" fill="#e6b917"/>
<rect x="669.00" y="325.28" width="38.00" height="7.88" fill="#e6b917"/>
<rect x="707.00" y="322.13" width="7.00" height="11.04" fill="#f9951a"/>
<rect x="714.00" y="322.13" width="6.00" height="11.04" fill="#e6b917"/>
<rect x="720.00" y="325.28" width="6.00" height="7.88" fill="#e6b917"/>
<rect x="726.00" y="323.70" width="44.00" height="9.46" fill="#e6b917"/>
<rect x="770.00" y="322.13" width="19.00" height="11.04" fill="#e6b917"/>
<rect x="789.00" y="326.86" width="7.00" height="6.31" fill="#e6b917"/>
<rect x="796.00" y="323.70" width="6.00" height="9.46" fill="#e6b917"/>
<rect x="802.00" y="325.28" width="6.00" height="7.88" fill="#e6b917"/>
<rect x="808.00" y="326.86" width="6.00" height="6.31" fill="#e6b917"/>
<rect x="814.00" y="325.28" width="7.00" height="7.88" fill="#e6b917"/>
<rect x="821.00" y="328.43" width="12.00" height="4.73" fill="#e6b917"/>
<rect x="833.00" y="326.86" width="7.00" height="6.31" fill="#e6b917"/>
<rect x="840.00" y="328.43" width="31.00" height="4.73" fill="#e6b917"/>
<rect x="871.00" y="326.86" width="13.00" height="6.31" fill="#e6b917"/>
<rect x="884.00" y="323.70" width="50.00" height="9.46" fill="#e6b917"/>
<rect x="934.00" y="326.86" width="7.00" height="6.31" fill="#e6b917"/>
<rect x="941.00" y="328.43" width="31.00" height="4.73" fill="#e6b917"/>
<rect x="972.00" y="325.28" width="7.00" height="7.88" fill="#e6b917"/>
<rect x="979.00" y="328.43" width="18.00" height="4.73" fill="#e6b917"/>
<rect x="997.00" y="325.28" width="7.00" height="7.88" fill="#e6b917"/>
<rect x="1004.00" y="328.43" width="6.00" height="4.73" fill="#e6b917"/>
<rect x="632.00" y="334.74" width="18.00" height="11.04" fill="#2f8b59"/>
<rect x="650.00" y="336.32" width="64.00" height="9.46" fill="#2f8b59"/>
<rect x="714.00" y="334.74" width="6.00" height="11.04" fill="#2f8b59"/>
<rect x="720.00" y="336.32" width="19.00" height="9.46" fill="#2f8b59"/>
<rect x="739.00" y="334.74" width="6.00" height="11.04" fill="#2f8b59"/>
<rect x="745.00" y="336.32" width="25.00" height="9.46" fill="#2f8b59"/>
<rect x="770.00" y="334.74" width="7.00" height="11.04" fill="#2f8b59"/>
<rect x="777.00" y="336.32" width="233.00" height="9.46" fill="#2f8b59"/>
<rect x="632.00" y="382.22" width="6.00" height="1.40" fill="#5590f5"/>
<rect x="638.00" y="372.58" width="6.00" height="11.04" fill="#5590f5"/>
<rect x="644.00" y="382.22" width="70.00" height="1.40" fill="#5590f5"/>
<rect x="714.00" y="380.47" width="6.00" height="3.15" fill="#5590f5"/>
<rect x="720.00" y="382.22" width="290.00" height="1.40" fill="#5590f5"/>
<rect x="632.00" y="388.35" width="6.00" height="7.88" fill="#5590f5"/>
<rect x="638.00" y="393.08" width="6.00" height="3.15" fill="#5590f5"/>
<rect x="644.00" y="388.35" width="6.00" height="7.88" fill="#5590f5"/>
<rect x="650.00" y="393.08" width="57.00" height="3.15" fill="#5590f5"/>
<rect x="707.00" y="391.50" width="7.00" height="4.73" fill="#5590f5"/>
<rect x="714.00" y="389.93" width="6.00" height="6.31" fill="#5590f5"/>
<rect x="720.00" y="393.08" width="19.00" height="3.15" fill="#5590f5"/>
<rect x="739.00" y="385.20" width="6.00" height="11.04" fill="#5590f5"/>
<rect x="745.00" y="393.08" width="25.00" height="3.15" fill="#5590f5"/>
<rect x="770.00" y="385.20" width="7.00" height="11.04" fill="#5590f5"/>
<rect x="777.00" y="393.08" width="12.00" height="3.15" fill="#5590f5"/>
<rect x="789.00" y="391.50" width="7.00" height="4.73" fill="#5590f5"/>
<rect x="796.00" y="393.08" width="56.00" height="3.15" fill="#5590f5"/>
<rect x="852.00" y="391.50" width="7.00" height="4.73" fill="#5590f5"/>
<rect x="859.00" y="393.08" width="69.00" height="3.15" fill="#5590f5"/>
<rect x="928.00" y="391.50" width="6.00" height="4.73" fill="#5590f5"/>
<rect x="934.00" y="393.08" width="76.00" height="3.15" fill="#5590f5"/>
<rect x="632.00" y="397.81" width="378.00" height="11.04" fill="#e6b917"/>
<rect x="632.00" y="410.42" width="378.00" height="11.04" fill="#2f8b59"/>
<rect x="632.00" y="445.29" width="378.00" height="1.40" fill="#2f8b59"/>
<rect x="632.00" y="448.27" width="378.00" height="11.04" fill="#2f8b59"/>
<rect x="632.00" y="460.88" width="378.00" height="11.04" fill="#2f8b59"/>
<rect x="632.00" y="473.49" width="378.00" height="11.04" fill="#2f8b59"/>
<rect x="632.00" y="486.11" width="378.00" height="11.04" fill="#2f8b59"/>
<rect x="632.00" y="508.36" width="378.00" height="1.40" fill="#2f8b59"/>
<rect x="632.00" y="523.95" width="378.00" height="11.04" fill="#2f8b59"/>
<rect x="632.00" y="544.45" width="6.00" height="3.15" fill="#5590f5"/>
<rect x="638.00" y="542.87" width="12.00" height="4.73" fill="#5590f5"/>
<rect x="650.00" y="538.14" width="7.00" height="9.46" fill="#5590f5"/>
<rect x="657.00" y="541.30" width="6.00" height="6.31" fill="#5590f5"/>
<rect x="663.00" y="538.14" width="6.00" height="9.46" fill="#5590f5"/>
<rect x="669.00" y="542.87" width="7.00" height="4.73" fill="#5590f5"/>
<rect x="676.00" y="544.45" width="6.00" height="3.15" fill="#5590f5"/>
<rect x="682.00" y="542.87" width="6.00" height="4.73" fill="#5590f5"/>
<rect x="688.00" y="544.45" width="7.00" height="3.15" fill="#5590f5"/>
<rect x="695.00" y="542.87" width="6.00" height="4.73" fill="#5590f5"/>
<rect x="701.00" y="544.45" width="19.00" height="3.15" fill="#5590f5"/>
<rect x="720.00" y="542.87" width="6.00" height="4.73" fill="#5590f5"/>
<rect x="726.00" y="544.45" width="13.00" height="3.15" fill="#5590f5"/>
<rect x="739.00" y="539.72" width="6.00" height="7.88" fill="#5590f5"/>
<rect x="745.00" y="544.45" width="32.00" height="3.15" fill="#5590f5"/>
<rect x="777.00" y="541.30" width="6.00" height="6.31" fill="#5590f5"/>
<rect x="783.00" y="544.45" width="57.00" height="3.15" fill="#5590f5"/>
<rect x="840.00" y="542.87" width="6.00" height="4.73" fill="#5590f5"/>
<rect x="846.00" y="544.45" width="6.00" height="3.15" fill="#5590f5"/>
<rect x="852.00" y="541.30" width="7.00" height="6.31" fill="#5590f5"/>
<rect x="859.00" y="542.87" width="6.00" height="4.73" fill="#5590f5"/>
<rect x="865.00" y="544.45" width="38.00" height="3.15" fill="#5590f5"/>
<rect x="903.00" y="546.20" width="6.00" height="1.40" fill="#5590f5"/>
<rect x="909.00" y="542.87" width="13.00" height="4.73" fill="#5590f5"/>
<rect x="922.00" y="544.45" width="19.00" height="3.15" fill="#5590f5"/>
<rect x="941.00" y="541.30" width="6.00" height="6.31" fill="#5590f5"/>
<rect x="947.00" y="544.45" width="19.00" height="3.15" fill="#5590f5"/>
<rect x="966.00" y="542.87" width="6.00" height="4.73" fill="#5590f5"/>
<rect x="972.00" y="544.45" width="7.00" height="3.15" fill="#5590f5"/>
<rect x="979.00" y="538.14" width="6.00" height="9.46" fill="#5590f5"/>
<rect x="985.00" y="542.87" width="6.00" height="4.73" fill="#5590f5"/>
<rect x="991.00" y="544.45" width="6.00" height="3.15" fill="#5590f5"/>
<rect x="997.00" y="541.30" width="13.00" height="6.31" fill="#5590f5"/>
<rect x="632.00" y="558.82" width="25.00" height="1.40" fill="#5590f5"/>
<rect x="657.00" y="549.18" width="6.00" height="11.04" fill="#5590f5"/>
<rect x="663.00" y="558.82" width="347.00" height="1.40" fill="#5590f5"/>
<rect x="632.00" y="561.79" width="378.00" height="11.04" fill="#2f8b59"/>
<rect x="632.00" y="609.27" width="126.00" height="1.40" fill="#2f8b59"/>
<rect x="758.00" y="607.52" width="25.00" height="3.15" fill="#2f8b59"/>
<rect x="783.00" y="605.94" width="25.00" height="4.73" fill="#2f8b59"/>
<rect x="808.00" y="604.37" width="6.00" height="6.31" fill="#2f8b59"/>
<rect x="814.00" y="602.79" width="19.00" height="7.88" fill="#2f8b59"/>
<rect x="833.00" y="601.21" width="13.00" height="9.46" fill="#2f8b59"/>
<rect x="846.00" y="599.63" width="82.00" height="11.04" fill="#2f8b59"/>
<rect x="928.00" y="601.21" width="19.00" height="9.46" fill="#2f8b59"/>
<rect x="947.00" y="602.79" width="13.00" height="7.88" fill="#2f8b59"/>
<rect x="960.00" y="604.37" width="12.00" height="6.31" fill="#2f8b59"/>
<rect x="972.00" y="605.94" width="13.00" height="4.73" fill="#2f8b59"/>
<rect x="985.00" y="607.52" width="25.00" height="3.15" fill="#2f8b59"/>
<rect x="632.00" y="621.89" width="107.00" height="1.40" fill="#2f8b59"/>
<rect x="739.00" y="620.13" width="12.00" height="3.15" fill="#2f8b59"/>
<rect x="751.00" y="618.56" width="7.00" height="4.73" fill="#2f8b59"/>
<rect x="758.00" y="616.98" width="6.00" height="6.31" fill="#2f8b59"/>
<rect x="764.00" y="615.40" width="6.00" height="7.88" fill="#2f8b59"/>
<rect x="770.00" y="612.25" width="108.00" height="11.04" fill="#2f8b59"/>
<rect x="878.00" y="613.83" width="6.00" height="9.46" fill="#2f8b59"/>
<rect x="884.00" y="615.40" width="6.00" height="7.88" fill="#2f8b59"/>
<rect x="890.00" y="616.98" width="7.00" height="6.31" fill="#2f8b59"/>
<rect x="897.00" y="618.56" width="6.00" height="4.73" fill="#2f8b59"/>
<rect x="903.00" y="620.13" width="6.00" height="3.15" fill="#2f8b59"/>
<rect x="909.00" y="621.89" width="101.00" height="1.40" fill="#2f8b59"/>
<rect x="632.00" y="634.50" width="69.00" height="1.40" fill="#2f8b59"/>
<rect x="701.00" y="632.75" width="76.00" height="3.15" fill="#2f8b59"/>
<rect x="777.00" y="624.86" width="126.00" height="11.04" fill="#2f8b59"/>
<rect x="903.00" y="634.50" width="107.00" height="1.40" fill="#2f8b59"/>
<rect x="632.00" y="647.11" width="378.00" height="1.40" fill="#5590f5"/>
<rect x="632.00" y="653.24" width="6.00" height="7.88" fill="#5590f5"/>
<rect x="638.00" y="656.40" width="6.00" height="4.73" fill="#5590f5"/>
<rect x="644.00" y="654.82" width="6.00" height="6.31" fill="#5590f5"/>
<rect x="650.00" y="650.09" width="7.00" height="11.04" fill="#5590f5"/>
<rect x="657.00" y="656.40" width="6.00" height="4.73" fill="#5590f5"/>
<rect x="663.00" y="654.82" width="6.00" height="6.31" fill="#5590f5"/>
<rect x="669.00" y="656.40" width="26.00" height="4.73" fill="#5590f5"/>
<rect x="695.00" y="654.82" width="6.00" height="6.31" fill="#5590f5"/>
<rect x="701.00" y="656.40" width="19.00" height="4.73" fill="#5590f5"/>
<rect x="720.00" y="650.09" width="6.00" height="11.04" fill="#5590f5"/>
<rect x="726.00" y="654.82" width="19.00" height="6.31" fill="#5590f5"/>
<rect x="745.00" y="656.40" width="6.00" height="4.73" fill="#5590f5"/>
<rect x="751.00" y="654.82" width="13.00" height="6.31" fill="#5590f5"/>
<rect x="764.00" y="650.09" width="6.00" height="11.04" fill="#5590f5"/>
<rect x="770.00" y="656.40" width="7.00" height="4.73" fill="#5590f5"/>
<rect x="777.00" y="650.09" width="6.00" height="11.04" fill="#5590f5"/>
<rect x="783.00" y="656.40" width="38.00" height="4.73" fill="#5590f5"/>
<rect x="821.00" y="654.82" width="31.00" height="6.31" fill="#5590f5"/>
<rect x="852.00" y="656.40" width="19.00" height="4.73" fill="#5590f5"/>
<rect x="871.00" y="650.09" width="7.00" height="11.04" fill="#5590f5"/>
<rect x="878.00" y="656.40" width="6.00" height="4.73" fill="#5590f5"/>
<rect x="884.00" y="654.82" width="44.00" height="6.31" fill="#5590f5"/>
<rect x="928.00" y="656.40" width="6.00" height="4.73" fill="#5590f5"/>
<rect x="934.00" y="654.82" width="13.00" height="6.31" fill="#5590f5"/>
<rect x="947.00" y="656.40" width="6.00" height="4.73" fill="#5590f5"/>
<rect x="953.00" y="654.82" width="7.00" height="6.31" fill="#5590f5"/>
<rect x="960.00" y="656.40" width="19.00" height="4.73" fill="#5590f5"/>
<rect x="979.00" y="654.82" width="12.00" height="6.31" fill="#5590f5"/>
<rect x="991.00" y="656.40" width="6.00" height="4.73" fill="#5590f5"/>
<rect x="997.00" y="654.82" width="7.00" height="6.31" fill="#5590f5"/>
<rect x="1004.00" y="656.40" width="6.00" height="4.73" fill="#5590f5"/>
<rect x="632.00" y="662.70" width="378.00" height="11.04" fill="#2f8b59"/>
<rect x="632.00" y="684.96" width="6.00" height="1.40" fill="#2f8b59"/>
<rect x="638.00" y="681.63" width="19.00" height="4.73" fill="#2f8b59"/>
<rect x="657.00" y="675.32" width="101.00" height="11.04" fill="#2f8b59"/>
<rect x="758.00" y="678.47" width="12.00" height="7.88" fill="#2f8b59"/>
<rect x="770.00" y="680.05" width="7.00" height="6.31" fill="#2f8b59"/>
<rect x="777.00" y="683.20" width="94.00" height="3.15" fill="#2f8b59"/>
<rect x="871.00" y="684.96" width="139.00" height="1.40" fill="#2f8b59"/>
<rect x="632.00" y="695.82" width="18.00" height="3.15" fill="#2f8b59"/>
<rect x="650.00" y="692.66" width="7.00" height="6.31" fill="#2f8b59"/>
<rect x="657.00" y="691.09" width="6.00" height="7.88" fill="#2f8b59"/>
<rect x="663.00" y="687.93" width="107.00" height="11.04" fill="#2f8b59"/>
<rect x="770.00" y="694.24" width="13.00" height="4.73" fill="#2f8b59"/>
<rect x="783.00" y="695.82" width="38.00" height="3.15" fill="#2f8b59"/>
<rect x="821.00" y="697.57" width="82.00" height="1.40" fill="#2f8b59"/>
<rect x="903.00" y="695.82" width="107.00" height="3.15" fill="#2f8b59"/>
<rect x="632.00" y="710.18" width="138.00" height="1.40" fill="#2f8b59"/>
<rect x="770.00" y="702.12" width="127.00" height="9.46" fill="#2f8b59"/>
<rect x="897.00" y="710.18" width="113.00" height="1.40" fill="#2f8b59"/>
<rect x="632.00" y="722.80" width="18.00" height="1.40" fill="#2f8b59"/>
<rect x="650.00" y="721.04" width="45.00" height="3.15" fill="#2f8b59"/>
<rect x="695.00" y="719.47" width="6.00" height="4.73" fill="#2f8b59"/>
<rect x="701.00" y="717.89" width="31.00" height="6.31" fill="#2f8b59"/>
<rect x="732.00" y="716.31" width="19.00" height="7.88" fill="#2f8b59"/>
<rect x="751.00" y="714.74" width="7.00" height="9.46" fill="#2f8b59"/>
<rect x="758.00" y="713.16" width="75.00" height="11.04" fill="#2f8b59"/>
<rect x="833.00" y="714.74" width="32.00" height="9.46" fill="#2f8b59"/>
<rect x="865.00" y="716.31" width="6.00" height="7.88" fill="#2f8b59"/>
<rect x="871.00" y="717.89" width="7.00" height="6.31" fill="#2f8b59"/>
<rect x="878.00" y="719.47" width="6.00" height="4.73" fill="#2f8b59"/>
<rect x="884.00" y="721.04" width="126.00" height="3.15" fill="#2f8b59"/>
<rect x="51.00" y="801.46" width="6.00" height="11.04" fill="#e6b917"/>
<rect x="57.00" y="804.61" width="7.00" height="7.88" fill="#e6b917"/>
<rect x="64.00" y="804.61" width="6.00" height="7.88" fill="#e6b917"/>
<rect x="70.00" y="801.46" width="6.00" height="11.04" fill="#e6b917"/>
<rect x="76.00" y="803.04" width="7.00" height="9.46" fill="#e6b917"/>
<rect x="83.00" y="804.61" width="6.00" height="7.88" fill="#e6b917"/>
<rect x="89.00" y="804.61" width="6.00" height="7.88" fill="#e6b917"/>
<rect x="95.00" y="803.04" width="6.00" height="9.46" fill="#e6b917"/>
<rect x="101.00" y="806.19" width="7.00" height="6.31" fill="#e6b917"/>
<rect x="108.00" y="799.88" width="6.00" height="12.61" fill="#e6b917"/>
<rect x="114.00" y="806.19" width="6.00" height="6.31" fill="#e6b917"/>
<rect x="120.00" y="793.58" width="7.00" height="18.92" fill="#f9951a"/>
<rect x="127.00" y="804.61" width="6.00" height="7.88" fill="#e6b917"/>
<rect x="133.00" y="804.61" width="6.00" height="7.88" fill="#e6b917"/>
<rect x="139.00" y="806.19" width="7.00" height="6.31" fill="#e6b917"/>
<rect x="146.00" y="804.61" width="6.00" height="7.88" fill="#e6b917"/>
<rect x="152.00" y="803.04" width="6.00" height="9.46" fill="#e6b917"/>
<rect x="158.00" y="803.04" width="7.00" height="9.46" fill="#e6b917"/>
<rect x="165.00" y="804.61" width="6.00" height="7.88" fill="#e6b917"/>
<rect x="171.00" y="804.61" width="6.00" height="7.88" fill="#e6b917"/>
<rect x="177.00" y="796.73" width="6.00" height="15.77" fill="#e6b917"/>
<rect x="183.00" y="798.31" width="7.00" height="14.19" fill="#e6b917"/>
<rect x="190.00" y="798.31" width="6.00" height="14.19" fill="#e6b917"/>
<rect x="196.00" y="803.04" width="6.00" height="9.46" fill="#e6b917"/>
<rect x="202.00" y="804.61" width="7.00" height="7.88" fill="#e6b917"/>
<rect x="209.00" y="793.58" width="6.00" height="18.92" fill="#f9951a"/>
<rect x="215.00" y="806.19" width="6.00" height="6.31" fill="#e6b917"/>
<rect x="221.00" y="801.46" width="7.00" height="11.04" fill="#e6b917"/>
<rect x="228.00" y="804.61" width="6.00" height="7.88" fill="#e6b917"/>
<rect x="234.00" y="801.46" width="6.00" height="11.04" fill="#e6b917"/>
<rect x="240.00" y="806.19" width="7.00" height="6.31" fill="#e6b917"/>
<rect x="247.00" y="804.61" width="6.00" height="7.88" fill="#e6b917"/>
<rect x="253.00" y="804.61" width="6.00" height="7.88" fill="#e6b917"/>
<rect x="259.00" y="801.46" width="7.00" height="11.04" fill="#e6b917"/>
<rect x="266.00" y="799.88" width="6.00" height="12.61" fill="#e6b917"/>
<rect x="272.00" y="785.69" width="6.00" height="26.80" fill="#f9951a"/>
<rect x="278.00" y="785.69" width="6.00" height="26.80" fill="#f9951a"/>
<rect x="284.00" y="803.04" width="7.00" height="9.46" fill="#e6b917"/>
<rect x="291.00" y="806.19" width="6.00" height="6.31" fill="#e6b917"/>
<rect x="297.00" y="804.61" width="6.00" height="7.88" fill="#e6b917"/>
<rect x="303.00" y="803.04" width="7.00" height="9.46" fill="#e6b917"/>
<rect x="310.00" y="799.88" width="6.00" height="12.61" fill="#e6b917"/>
<rect x="316.00" y="806.19" width="6.00" height="6.31" fill="#e6b917"/>
<rect x="322.00" y="804.61" width="7.00" height="7.88" fill="#e6b917"/>
<rect x="329.00" y="804.61" width="6.00" height="7.88" fill="#e6b917"/>
<rect x="335.00" y="804.61" width="6.00" height="7.88" fill="#e6b917"/>
<rect x="341.00" y="804.61" width="7.00" height="7.88" fill="#e6b917"/>
<rect x="348.00" y="801.46" width="6.00" height="11.04" fill="#e6b917"/>
<rect x="354.00" y="793.58" width="6.00" height="18.92" fill="#f9951a"/>
<rect x="360.00" y="795.15" width="6.00" height="17.34" fill="#f9951a"/>
<rect x="366.00" y="795.15" width="7.00" height="17.34" fill="#f9951a"/>
<rect x="373.00" y="795.15" width="6.00" height="17.34" fill="#f9951a"/>
<rect x="379.00" y="795.15" width="6.00" height="17.34" fill="#f9951a"/>
<rect x="385.00" y="796.73" width="7.00" height="15.77" fill="#f9951a"/>
<rect x="392.00" y="796.73" width="6.00" height="15.77" fill="#e6b917"/>
<rect x="398.00" y="796.73" width="6.00" height="15.77" fill="#f9951a"/>
<rect x="404.00" y="796.73" width="7.00" height="15.77" fill="#e6b917"/>
<rect x="411.00" y="806.19" width="6.00" height="6.31" fill="#e6b917"/>
<rect x="417.00" y="804.61" width="6.00" height="7.88" fill="#e6b917"/>
<rect x="423.00" y="804.61" width="7.00" height="7.88" fill="#e6b917"/>
<rect x="430.00" y="806.19" width="6.00" height="6.31" fill="#e6b917"/>
<rect x="436.00" y="804.61" width="6.00" height="7.88" fill="#e6b917"/>
<rect x="442.00" y="806.19" width="7.00" height="6.31" fill="#e6b917"/>
<rect x="449.00" y="804.61" width="6.00" height="7.88" fill="#e6b917"/>
<rect x="455.00" y="804.61" width="6.00" height="7.88" fill="#e6b917"/>
<rect x="461.00" y="796.73" width="6.00" height="15.77" fill="#f9951a"/>
<rect x="467.00" y="804.61" width="7.00" height="7.88" fill="#e6b917"/>
<rect x="474.00" y="795.15" width="6.00" height="17.34" fill="#f9951a"/>
<rect x="480.00" y="799.88" width="6.00" height="12.61" fill="#e6b917"/>
<rect x="486.00" y="806.19" width="7.00" height="6.31" fill="#e6b917"/>
<rect x="493.00" y="804.61" width="6.00" height="7.88" fill="#e6b917"/>
<rect x="499.00" y="792.00" width="6.00" height="20.50" fill="#f9951a"/>
<rect x="505.00" y="804.61" width="7.00" height="7.88" fill="#e6b917"/>
<rect x="512.00" y="804.61" width="6.00" height="7.88" fill="#e6b917"/>
<rect x="518.00" y="806.19" width="6.00" height="6.31" fill="#e6b917"/>
<rect x="524.00" y="806.19" width="7.00" height="6.31" fill="#e6b917"/>
<rect x="531.00" y="804.61" width="6.00" height="7.88" fill="#e6b917"/>
<rect x="537.00" y="806.19" width="6.00" height="6.31" fill="#e6b917"/>
<rect x="543.00" y="804.61" width="6.00" height="7.88" fill="#e6b917"/>
<rect x="549.00" y="806.19" width="7.00" height="6.31" fill="#e6b917"/>
<rect x="556.00" y="806.19" width="6.00" height="6.31" fill="#e6b917"/>
<rect x="562.00" y="804.61" width="6.00" height="7.88" fill="#e6b917"/>
<rect x="568.00" y="806.19" width="7.00" height="6.31" fill="#e6b917"/>
<rect x="575.00" y="806.19" width="6.00" height="6.31" fill="#e6b917"/>
<rect x="581.00" y="806.19" width="6.00" height="6.31" fill="#e6b917"/>
<rect x="587.00" y="804.61" width="7.00" height="7.88" fill="#e6b917"/>
<rect x="594.00" y="806.19" width="6.00" height="6.31" fill="#e6b917"/>
<rect x="600.00" y="804.61" width="6.00" height="7.88" fill="#e6b917"/>
<rect x="606.00" y="806.19" width="7.00" height="6.31" fill="#e6b917"/>
<rect x="613.00" y="804.61" width="6.00" height="7.88" fill="#e6b917"/>
<rect x="619.00" y="792.00" width="6.00" height="20.50" fill="#f9951a"/>
<rect x="625.00" y="790.42" width="7.00" height="22.07" fill="#f9951a"/>
<rect x="632.00" y="790.42" width="6.00" height="22.07" fill="#f9951a"/>
<rect x="638.00" y="779.38" width="6.00" height="33.11" fill="#fa3937"/>
<rect x="644.00" y="774.65" width="6.00" height="37.84" fill="#fa3937"/>
<rect x="650.00" y="803.04" width="7.00" height="9.46" fill="#e6b917"/>
<rect x="657.00" y="806.19" width="6.00" height="6.31" fill="#e6b917"/>
<rect x="663.00" y="804.61" width="6.00" height="7.88" fill="#e6b917"/>
<rect x="669.00" y="798.31" width="7.00" height="14.19" fill="#e6b917"/>
<rect x="676.00" y="804.61" width="6.00" height="7.88" fill="#e6b917"/>
<rect x="682.00" y="803.04" width="6.00" height="9.46" fill="#e6b917"/>
<rect x="688.00" y="803.04" width="7.00" height="9.46" fill="#e6b917"/>
<rect x="695.00" y="795.15" width="6.00" height="17.34" fill="#f9951a"/>
<rect x="701.00" y="799.88" width="6.00" height="12.61" fill="#e6b917"/>
<rect x="707.00" y="751.00" width="7.00" height="61.49" fill="#fa3937"/>
<rect x="714.00" y="788.84" width="6.00" height="23.65" fill="#f9951a"/>
<rect x="720.00" y="801.46" width="6.00" height="11.04" fill="#e6b917"/>
<rect x="726.00" y="795.15" width="6.00" height="17.34" fill="#f9951a"/>
<rect x="732.00" y="788.84" width="7.00" height="23.65" fill="#f9951a"/>
<rect x="739.00" y="780.96" width="6.00" height="31.54" fill="#fa3937"/>
<rect x="745.00" y="780.96" width="6.00" height="31.54" fill="#fa3937"/>
<rect x="751.00" y="790.42" width="7.00" height="22.07" fill="#f9951a"/>
<rect x="758.00" y="798.31" width="6.00" height="14.19" fill="#e6b917"/>
<rect x="764.00" y="785.69" width="6.00" height="26.80" fill="#f9951a"/>
<rect x="770.00" y="776.23" width="7.00" height="36.27" fill="#fa3937"/>
<rect x="777.00" y="787.27" width="6.00" height="25.23" fill="#f9951a"/>
<rect x="783.00" y="793.58" width="6.00" height="18.92" fill="#f9951a"/>
<rect x="789.00" y="803.04" width="7.00" height="9.46" fill="#e6b917"/>
<rect x="796.00" y="796.73" width="6.00" height="15.77" fill="#e6b917"/>
<rect x="802.00" y="801.46" width="6.00" height="11.04" fill="#e6b917"/>
<rect x="808.00" y="803.04" width="6.00" height="9.46" fill="#e6b917"/>
<rect x="814.00" y="804.61" width="7.00" height="7.88" fill="#e6b917"/>
<rect x="821.00" y="806.19" width="6.00" height="6.31" fill="#e6b917"/>
<rect x="827.00" y="804.61" width="6.00" height="7.88" fill="#e6b917"/>
<rect x="833.00" y="804.61" width="7.00" height="7.88" fill="#e6b917"/>
<rect x="840.00" y="804.61" width="6.00" height="7.88" fill="#e6b917"/>
<rect x="846.00" y="806.19" width="6.00" height="6.31" fill="#e6b917"/>
<rect x="852.00" y="803.04" width="7.00" height="9.46" fill="#e6b917"/>
<rect x="859.00" y="804.61" width="6.00" height="7.88" fill="#e6b917"/>
<rect x="865.00" y="806.19" width="6.00" height="6.31" fill="#e6b917"/>
<rect x="871.00" y="803.04" width="7.00" height="9.46" fill="#e6b917"/>
<rect x="878.00" y="799.88" width="6.00" height="12.61" fill="#e6b917"/>
<rect x="884.00" y="795.15" width="6.00" height="17.34" fill="#f9951a"/>
<rect x="890.00" y="795.15" width="7.00" height="17.34" fill="#f9951a"/>
<rect x="897.00" y="795.15" width="6.00" height="17.34" fill="#f9951a"/>
<rect x="903.00" y="795.15" width="6.00" height="17.34" fill="#f9951a"/>
<rect x="909.00" y="796.73" width="6.00" height="15.77" fill="#e6b917"/>
<rect x="915.00" y="796.73" width="7.00" height="15.77" fill="#f9951a"/>
<rect x="922.00" y="795.15" width="6.00" height="17.34" fill="#f9951a"/>
<rect x="928.00" y="795.15" width="6.00" height="17.34" fill="#f9951a"/>
<rect x="934.00" y="799.88" width="7.00" height="12.61" fill="#e6b917"/>
<rect x="941.00" y="804.61" width="6.00" height="7.88" fill="#e6b917"/>
<rect x="947.00" y="804.61" width="6.00" height="7.88" fill="#e6b917"/>
<rect x="953.00" y="804.61" width="7.00" height="7.88" fill="#e6b917"/>
<rect x="960.00" y="804.61" width="6.00" height="7.88" fill="#e6b917"/>
<rect x="966.00" y="806.19" width="6.00" height="6.31" fill="#e6b917"/>
<rect x="972.00" y="799.88" width="7.00" height="12.61" fill="#e6b917"/>
<rect x="979.00" y="806.19" width="6.00" height="6.31" fill="#e6b917"/>
<rect x="985.00" y="806.19" width="6.00" height="6.31" fill="#e6b917"/>
<rect x="991.00" y="806.19" width="6.00" height="6.31" fill="#e6b917"/>
<rect x="997.00" y="801.46" width="7.00" height="11.04" fill="#e6b917"/>
<rect x="1004.00" y="804.61" width="6.00" height="7.88" fill="#e6b917"/>
</g>
<rect x="9.34" y="10.88" width="3.78" height="1.25" fill="#989898"/>
<rect x="133.01" y="10.88" width="880.87" height="1.25" fill="#989898"/>
<rect x="9.34" y="12.13" width="1.25" height="717.75" fill="#989898"/>
<rect x="1012.63" y="12.13" width="1.25" height="717.75" fill="#989898"/>
<rect x="9.34" y="729.88" width="1004.54" height="1.25" fill="#989898"/>
<rect x="13.12" y="36.11" width="996.98" height="1.25" fill="#989898"/>
<rect x="13.12" y="99.18" width="996.98" height="1.25" fill="#989898"/>
<rect x="13.12" y="591.13" width="996.98" height="1.25" fill="#989898"/>
<polygon points="26.75,111.57 31.04,111.57 28.89,115.77" fill="#d6d6d6"/>
<rect x="28.34" y="118.73" width="1.10" height="12.61" fill="#9c9c9c"/>
<rect x="29.45" y="124.48" width="8.31" height="1.10" fill="#9c9c9c"/>
<polygon points="45.67,124.18 49.97,124.18 47.82,128.38" fill="#d6d6d6"/>
<rect x="28.34" y="131.34" width="1.10" height="12.61" fill="#9c9c9c"/>
<rect x="47.27" y="131.34" width="1.10" height="12.61" fill="#9c9c9c"/>
<rect x="48.37" y="137.10" width="8.32" height="1.10" fill="#9c9c9c"/>
<polygon points="64.60,136.80 68.91,136.80 66.75,141.00" fill="#d6d6d6"/>
<rect x="28.34" y="143.95" width="1.10" height="12.61" fill="#9c9c9c"/>
<rect x="47.27" y="143.95" width="1.10" height="12.61" fill="#9c9c9c"/>
<rect x="66.20" y="143.95" width="1.10" height="12.61" fill="#9c9c9c"/>
<rect x="67.30" y="149.71" width="8.32" height="1.10" fill="#9c9c9c"/>
<polygon points="83.98,148.71 83.98,153.61 87.98,151.16" fill="#d6d6d6"/>
<rect x="28.34" y="156.57" width="1.10" height="12.61" fill="#9c9c9c"/>
<rect x="47.27" y="156.57" width="1.10" height="12.61" fill="#9c9c9c"/>
<rect x="66.20" y="156.57" width="1.10" height="6.86" fill="#9c9c9c"/>
<rect x="67.30" y="162.32" width="8.32" height="1.10" fill="#9c9c9c"/>
<polygon points="83.53,162.02 87.84,162.02 85.69,166.22" fill="#d6d6d6"/>
<rect x="28.34" y="169.18" width="1.10" height="12.61" fill="#9c9c9c"/>
<rect x="47.27" y="169.18" width="1.10" height="12.61" fill="#9c9c9c"/>
<rect x="85.14" y="169.18" width="1.10" height="12.61" fill="#9c9c9c"/>
<rect x="86.23" y="174.94" width="8.31" height="1.10" fill="#9c9c9c"/>
<rect x="28.34" y="181.80" width="1.10" height="12.61" fill="#9c9c9c"/>
<rect x="47.27" y="181.80" width="1.10" height="12.61" fill="#9c9c9c"/>
<rect x="85.14" y="181.80" width="1.10" height="12.61" fill="#9c9c9c"/>
<rect x="86.23" y="187.55" width="8.31" height="1.10" fill="#9c9c9c"/>
<rect x="28.34" y="194.41" width="1.10" height="12.61" fill="#9c9c9c"/>
<rect x="47.27" y="194.41" width="1.10" height="12.61" fill="#9c9c9c"/>
<rect x="85.14" y="194.41" width="1.10" height="12.61" fill="#9c9c9c"/>
<rect x="86.23" y="200.17" width="8.31" height="1.10" fill="#9c9c9c"/>
<rect x="28.34" y="207.02" width="1.10" height="12.61" fill="#9c9c9c"/>
<rect x="47.27" y="207.02" width="1.10" height="12.61" fill="#9c9c9c"/>
<rect x="85.14" y="207.02" width="1.10" height="12.61" fill="#9c9c9c"/>
<rect x="86.23" y="212.78" width="8.31" height="1.10" fill="#9c9c9c"/>
<rect x="28.34" y="219.64" width="1.10" height="12.61" fill="#9c9c9c"/>
<rect x="47.27" y="219.64" width="1.10" height="12.61" fill="#9c9c9c"/>
<rect x="85.14" y="219.64" width="1.10" height="12.61" fill="#9c9c9c"/>
<rect x="86.23" y="225.39" width="8.31" height="1.10" fill="#9c9c9c"/>
<rect x="28.34" y="232.25" width="1.10" height="12.61" fill="#9c9c9c"/>
<rect x="47.27" y="232.25" width="1.10" height="12.61" fill="#9c9c9c"/>
<rect x="85.14" y="232.25" width="1.10" height="6.86" fill="#9c9c9c"/>
<rect x="86.23" y="238.01" width="8.31" height="1.10" fill="#9c9c9c"/>
<rect x="28.34" y="244.87" width="1.10" height="12.61" fill="#9c9c9c"/>
<rect x="47.27" y="244.87" width="1.10" height="12.61" fill="#9c9c9c"/>
<rect x="48.37" y="250.62" width="8.32" height="1.10" fill="#9c9c9c"/>
<polygon points="65.05,249.62 65.05,254.52 69.05,252.07" fill="#d6d6d6"/>
<rect x="28.34" y="257.48" width="1.10" height="12.61" fill="#9c9c9c"/>
<rect x="47.27" y="257.48" width="1.10" height="12.61" fill="#9c9c9c"/>
<rect x="48.37" y="263.24" width="8.32" height="1.10" fill="#9c9c9c"/>
<rect x="28.34" y="270.09" width="1.10" height="12.61" fill="#9c9c9c"/>
<rect x="47.27" y="270.09" width="1.10" height="12.61" fill="#9c9c9c"/>
<rect x="48.37" y="275.85" width="8.32" height="1.10" fill="#9c9c9c"/>
<rect x="28.34" y="282.71" width="1.10" height="12.61" fill="#9c9c9c"/>
<rect x="47.27" y="282.71" width="1.10" height="12.61" fill="#9c9c9c"/>
<rect x="48.37" y="288.47" width="8.32" height="1.10" fill="#9c9c9c"/>
<rect x="28.34" y="295.32" width="1.10" height="12.61" fill="#9c9c9c"/>
<rect x="47.27" y="295.32" width="1.10" height="12.61" fill="#9c9c9c"/>
<rect x="48.37" y="301.08" width="8.32" height="1.10" fill="#9c9c9c"/>
<rect x="28.34" y="307.94" width="1.10" height="12.61" fill="#9c9c9c"/>
<rect x="47.27" y="307.94" width="1.10" height="12.61" fill="#9c9c9c"/>
<rect x="48.37" y="313.69" width="8.32" height="1.10" fill="#9c9c9c"/>
<rect x="28.34" y="320.55" width="1.10" height="12.61" fill="#9c9c9c"/>
<rect x="47.27" y="320.55" width="1.10" height="6.86" fill="#9c9c9c"/>
<rect x="48.37" y="326.31" width="8.32" height="1.10" fill="#9c9c9c"/>
<rect x="28.34" y="333.16" width="1.10" height="12.61" fill="#9c9c9c"/>
<rect x="29.45" y="338.92" width="8.31" height="1.10" fill="#9c9c9c"/>
<polygon points="45.67,338.62 49.97,338.62 47.82,342.82" fill="#d6d6d6"/>
<rect x="28.34" y="345.78" width="1.10" height="12.61" fill="#9c9c9c"/>
<rect x="47.27" y="345.78" width="1.10" height="12.61" fill="#9c9c9c"/>
<rect x="48.37" y="351.54" width="8.32" height="1.10" fill="#9c9c9c"/>
<rect x="28.34" y="358.39" width="1.10" height="12.61" fill="#9c9c9c"/>
<rect x="47.27" y="358.39" width="1.10" height="6.86" fill="#9c9c9c"/>
<rect x="48.37" y="364.15" width="8.32" height="1.10" fill="#9c9c9c"/>
<polygon points="64.60,363.85 68.91,363.85 66.75,368.05" fill="#d6d6d6"/>
<rect x="28.34" y="371.01" width="1.10" height="12.61" fill="#9c9c9c"/>
<rect x="66.20" y="371.01" width="1.10" height="12.61" fill="#9c9c9c"/>
<rect x="67.30" y="376.76" width="8.32" height="1.10" fill="#9c9c9c"/>
<rect x="28.34" y="383.62" width="1.10" height="12.61" fill="#9c9c9c"/>
<rect x="66.20" y="383.62" width="1.10" height="6.86" fill="#9c9c9c"/>
<rect x="67.30" y="389.38" width="8.32" height="1.10" fill="#9c9c9c"/>
<rect x="28.34" y="396.23" width="1.10" height="12.61" fill="#9c9c9c"/>
<rect x="29.45" y="401.99" width="8.31" height="1.10" fill="#9c9c9c"/>
<polygon points="46.12,400.99 46.12,405.89 50.12,403.44" fill="#d6d6d6"/>
<rect x="28.34" y="408.85" width="1.10" height="12.61" fill="#9c9c9c"/>
<rect x="29.45" y="414.61" width="8.31" height="1.10" fill="#9c9c9c"/>
<rect x="28.34" y="421.46" width="1.10" height="12.61" fill="#9c9c9c"/>
<rect x="29.45" y="427.22" width="8.31" height="1.10" fill="#9c9c9c"/>
<polygon points="46.12,426.22 46.12,431.12 50.12,428.67" fill="#d6d6d6"/>
<rect x="28.34" y="434.08" width="1.10" height="12.61" fill="#9c9c9c"/>
<rect x="29.45" y="439.83" width="8.31" height="1.10" fill="#9c9c9c"/>
<rect x="28.34" y="446.69" width="1.10" height="12.61" fill="#9c9c9c"/>
<rect x="29.45" y="452.45" width="8.31" height="1.10" fill="#9c9c9c"/>
<polygon points="45.67,452.15 49.97,452.15 47.82,456.35" fill="#d6d6d6"/>
<rect x="28.34" y="459.30" width="1.10" height="12.61" fill="#9c9c9c"/>
<rect x="47.27" y="459.30" width="1.10" height="12.61" fill="#9c9c9c"/>
<rect x="48.37" y="465.06" width="8.32" height="1.10" fill="#9c9c9c"/>
<rect x="28.34" y="471.92" width="1.10" height="12.61" fill="#9c9c9c"/>
<rect x="47.27" y="471.92" width="1.10" height="6.86" fill="#9c9c9c"/>
<rect x="48.37" y="477.68" width="8.32" height="1.10" fill="#9c9c9c"/>
<rect x="28.34" y="484.53" width="1.10" height="6.86" fill="#9c9c9c"/>
<rect x="29.45" y="490.29" width="8.31" height="1.10" fill="#9c9c9c"/>
<polygon points="45.67,489.99 49.97,489.99 47.82,494.19" fill="#d6d6d6"/>
<rect x="47.27" y="497.15" width="1.10" height="12.61" fill="#9c9c9c"/>
<rect x="48.37" y="502.90" width="8.32" height="1.10" fill="#9c9c9c"/>
<rect x="47.27" y="509.76" width="1.10" height="12.61" fill="#9c9c9c"/>
<rect x="48.37" y="515.52" width="8.32" height="1.10" fill="#9c9c9c"/>
<polygon points="65.05,514.52 65.05,519.42 69.05,516.97" fill="#d6d6d6"/>
<rect x="47.27" y="522.37" width="1.10" height="12.61" fill="#9c9c9c"/>
<rect x="48.37" y="528.13" width="8.32" height="1.10" fill="#9c9c9c"/>
<polygon points="64.60,527.83 68.91,527.83 66.75,532.03" fill="#d6d6d6"/>
<rect x="47.27" y="534.99" width="1.10" height="12.61" fill="#9c9c9c"/>
<rect x="66.20" y="534.99" width="1.10" height="12.61" fill="#9c9c9c"/>
<rect x="67.30" y="540.75" width="8.32" height="1.10" fill="#9c9c9c"/>
<rect x="47.27" y="547.60" width="1.10" height="12.61" fill="#9c9c9c"/>
<rect x="66.20" y="547.60" width="1.10" height="6.86" fill="#9c9c9c"/>
<rect x="67.30" y="553.36" width="8.32" height="1.10" fill="#9c9c9c"/>
<rect x="47.27" y="560.22" width="1.10" height="12.61" fill="#9c9c9c"/>
<rect x="48.37" y="565.97" width="8.32" height="1.10" fill="#9c9c9c"/>
<polygon points="65.05,564.97 65.05,569.87 69.05,567.42" fill="#d6d6d6"/>
<rect x="47.27" y="572.83" width="1.10" height="6.86" fill="#9c9c9c"/>
<rect x="48.37" y="578.59" width="8.32" height="1.10" fill="#9c9c9c"/>
<polygon points="26.75,603.52 31.04,603.52 28.89,607.72" fill="#d6d6d6"/>
<rect x="28.34" y="610.67" width="1.10" height="12.61" fill="#9c9c9c"/>
<rect x="29.45" y="616.43" width="8.31" height="1.10" fill="#9c9c9c"/>
<polygon points="46.12,615.43 46.12,620.33 50.12,617.88" fill="#d6d6d6"/>
<rect x="28.34" y="623.29" width="1.10" height="12.61" fill="#9c9c9c"/>
<rect x="29.45" y="629.04" width="8.31" height="1.10" fill="#9c9c9c"/>
<polygon points="45.67,628.74 49.97,628.74 47.82,632.94" fill="#d6d6d6"/>
<rect x="28.34" y="635.90" width="1.10" height="12.61" fill="#9c9c9c"/>
<rect x="47.27" y="635.90" width="1.10" height="12.61" fill="#9c9c9c"/>
<rect x="48.37" y="641.66" width="8.32" height="1.10" fill="#9c9c9c"/>
<rect x="28.34" y="648.51" width="1.10" height="12.61" fill="#9c9c9c"/>
<rect x="47.27" y="648.51" width="1.10" height="6.86" fill="#9c9c9c"/>
<rect x="48.37" y="654.27" width="8.32" height="1.10" fill="#9c9c9c"/>
<rect x="28.34" y="661.13" width="1.10" height="12.61" fill="#9c9c9c"/>
<rect x="29.45" y="666.89" width="8.31" height="1.10" fill="#9c9c9c"/>
<rect x="28.34" y="673.74" width="1.10" height="12.61" fill="#9c9c9c"/>
<rect x="29.45" y="679.50" width="8.31" height="1.10" fill="#9c9c9c"/>
<polygon points="46.12,678.50 46.12,683.40 50.12,680.95" fill="#d6d6d6"/>
<rect x="28.34" y="686.36" width="1.10" height="12.61" fill="#9c9c9c"/>
<rect x="29.45" y="692.11" width="8.31" height="1.10" fill="#9c9c9c"/>
<polygon points="46.12,691.11 46.12,696.01 50.12,693.56" fill="#d6d6d6"/>
<rect x="28.34" y="698.97" width="1.10" height="12.61" fill="#9c9c9c"/>
<rect x="29.45" y="704.73" width="8.31" height="1.10" fill="#9c9c9c"/>
<polygon points="46.12,703.73 46.12,708.63 50.12,706.18" fill="#d6d6d6"/>
<rect x="28.34" y="711.58" width="1.10" height="12.61" fill="#9c9c9c"/>
<rect x="29.45" y="717.34" width="8.31" height="1.10" fill="#9c9c9c"/>
<polygon points="46.12,716.34 46.12,721.24 50.12,718.79" fill="#d6d6d6"/>
<rect x="47.20" y="742.49" width="3.78" height="1.25" fill="#3c3c3c"/>
<rect x="240.28" y="742.49" width="773.60" height="1.25" fill="#3c3c3c"/>
<rect x="47.20" y="743.74" width="1.25" height="74.43" fill="#3c3c3c"/>
<rect x="1012.63" y="743.74" width="1.25" height="74.43" fill="#3c3c3c"/>
<rect x="47.20" y="818.18" width="966.68" height="1.25" fill="#3c3c3c"/>
<rect x="404.64" y="828.11" width="6.20" height="6.80" fill="#2f8b59"/>
<rect x="436.19" y="828.11" width="6.20" height="6.80" fill="#e6b917"/>
<rect x="467.74" y="828.11" width="6.20" height="6.80" fill="#f9951a"/>
<rect x="505.60" y="828.11" width="6.20" height="6.80" fill="#fa3937"/>
</svg>
<div id="t">
<span style="left:13.12px;top:5.50px;color:#e4e4e4;"> Power Tree (9/58) </span>
<span class="b" style="left:25.74px;top:18.11px;color:#e4e4e4;">Component</span>
<span class="b" style="left:322.31px;top:18.11px;color:#e4e4e4;">Freq</span>
<span class="b" style="left:423.27px;top:18.11px;color:#e4e4e4;">Temp</span>
<span class="b" style="left:505.30px;top:18.11px;color:#e4e4e4;">Power</span>
<span class="b" style="left:562.09px;top:18.11px;color:#e4e4e4;">Cumulative</span>
<span class="b" style="left:965.93px;top:18.11px;color:#e4e4e4;">History</span>
<span style="left:25.74px;top:43.34px;color:#f5953a;color:#f2a05c;-webkit-text-stroke:0.4px #f2a05c;">Battery 72% (4h 31m remaining, 13 cycles, 78.1 Wh)</span>
<span style="left:372.79px;top:43.34px;color:#4f4f4f;">34°C (34–34)</span>
<span class="b" style="left:486.37px;top:43.34px;color:#f5953a;">−9.426 W</span>
<span style="left:574.71px;top:43.34px;color:#4f4f4f;">1.101 Wh</span>
<span style="left:25.74px;top:55.96px;color:#4f4f4f;color:#434343;">AirPods 4 Case  [85%]</span>
<span style="left:25.74px;top:68.57px;color:#4f4f4f;color:#434343;">AirPods 4 (Right)  [100%]</span>
<span style="left:25.74px;top:81.18px;color:#4f4f4f;color:#434343;">AirPods 4 (Left)  [100%, charged]</span>
<span class="b" style="left:38.36px;top:106.41px;color:#f5953a;">Apple M5 Max (Mac17,7)</span>
<span class="b" style="left:492.68px;top:106.41px;color:#f5953a;">9.426 W</span>
<span style="left:574.71px;top:106.41px;color:#4f4f4f;">1.100 Wh</span>
<span class="b" style="left:57.29px;top:119.03px;color:#e3b945;">SoC</span>
<span class="b" style="left:492.68px;top:119.03px;color:#e3b945;">4.898 W</span>
<span style="left:562.09px;top:119.03px;color:#4f4f4f;">642.42 mWh</span>
<span style="left:76.22px;top:131.64px;color:#e3b945;">CPU (18 cores, 15%)</span>
<span style="left:372.79px;top:131.64px;color:#4f4f4f;">49°C (48–50)</span>
<span style="left:492.68px;top:131.64px;color:#e3b945;">2.357 W</span>
<span style="left:562.09px;top:131.64px;color:#4f4f4f;">347.97 mWh</span>
<span class="b" style="left:95.15px;top:144.25px;color:#e3b945;">E-Cores (12 cores, 5%)</span>
<span style="left:297.07px;top:144.25px;color:#4f4f4f;">1556 MHz</span>
<span style="left:372.79px;top:144.25px;color:#4f4f4f;">49°C (48–50)</span>
<span class="b" style="left:492.68px;top:144.25px;color:#e3b945;">1.031 W</span>
<span style="left:568.40px;top:144.25px;color:#4f4f4f;">96.09 mWh</span>
<span class="b" style="left:95.15px;top:156.87px;color:#e3b945;">P-Cores (6 cores, 36%)</span>
<span style="left:297.07px;top:156.87px;color:#4f4f4f;">2845 MHz</span>
<span style="left:372.79px;top:156.87px;color:#4f4f4f;">49°C (48–49)</span>
<span class="b" style="left:492.68px;top:156.87px;color:#e3b945;">1.326 W</span>
<span style="left:562.09px;top:156.87px;color:#4f4f4f;">251.88 mWh</span>
<span style="left:101.46px;top:169.48px;color:#489a72;">PACC_0</span>
<span style="left:170.87px;top:169.48px;color:#489a72;">( 73%)</span>
<span style="left:423.27px;top:169.48px;color:#4f4f4f;">49°C</span>
<span style="left:492.68px;top:169.48px;color:#489a72;">0.256 W</span>
<span style="left:574.71px;top:169.48px;color:#4f4f4f;">0.00 mWh</span>
<span style="left:101.46px;top:182.10px;color:#489a72;">PACC_1</span>
<span style="left:170.87px;top:182.10px;color:#489a72;">( 70%)</span>
<span style="left:423.27px;top:182.10px;color:#4f4f4f;">49°C</span>
<span style="left:492.68px;top:182.10px;color:#489a72;">0.140 W</span>
<span style="left:574.71px;top:182.10px;color:#4f4f4f;">0.00 mWh</span>
<span style="left:101.46px;top:194.71px;color:#489a72;">PACC_2</span>
<span style="left:170.87px;top:194.71px;color:#489a72;">( 32%)</span>
<span style="left:423.27px;top:194.71px;color:#4f4f4f;">49°C</span>
<span style="left:492.68px;top:194.71px;color:#489a72;">0.081 W</span>
<span style="left:574.71px;top:194.71px;color:#4f4f4f;">0.00 mWh</span>
<span style="left:101.46px;top:207.32px;color:#489a72;">PACC_3</span>
<span style="left:170.87px;top:207.32px;color:#489a72;">( 21%)</span>
<span style="left:423.27px;top:207.32px;color:#4f4f4f;">49°C</span>
<span style="left:492.68px;top:207.32px;color:#489a72;">0.050 W</span>
<span style="left:574.71px;top:207.32px;color:#4f4f4f;">0.00 mWh</span>
<span style="left:101.46px;top:219.94px;color:#489a72;">PACC_4</span>
<span style="left:170.87px;top:219.94px;color:#489a72;">( 16%)</span>
<span style="left:423.27px;top:219.94px;color:#4f4f4f;">48°C</span>
<span style="left:492.68px;top:219.94px;color:#489a72;">0.089 W</span>
<span style="left:574.71px;top:219.94px;color:#4f4f4f;">0.00 mWh</span>
<span style="left:101.46px;top:232.55px;color:#489a72;">PACC_5</span>
<span style="left:170.87px;top:232.55px;color:#489a72;">(  6%)</span>
<span style="left:423.27px;top:232.55px;color:#4f4f4f;">48°C</span>
<span style="left:492.68px;top:232.55px;color:#489a72;">0.043 W</span>
<span style="left:574.71px;top:232.55px;color:#4f4f4f;">0.00 mWh</span>
<span style="left:76.22px;top:245.17px;color:#489a72;">GPU (40 cores, 10%)</span>
<span style="left:303.38px;top:245.17px;color:#4f4f4f;">732 MHz</span>
<span style="left:372.79px;top:245.17px;color:#4f4f4f;">48°C (48–49)</span>
<span style="left:492.68px;top:245.17px;color:#489a72;">0.146 W</span>
<span style="left:568.40px;top:245.17px;color:#4f4f4f;">14.49 mWh</span>
<span style="left:63.60px;top:257.78px;color:#489a72;">ANE</span>
<span style="left:372.79px;top:257.78px;color:#4f4f4f;">44°C (35–49)</span>
<span style="left:492.68px;top:257.78px;color:#489a72;">0.000 W</span>
<span style="left:574.71px;top:257.78px;color:#4f4f4f;">0.70 mWh</span>
<span style="left:63.60px;top:270.39px;color:#489a72;">DRAM (105.6/128 GB)</span>
<span style="left:372.79px;top:270.39px;color:#4f4f4f;">48°C (47–49)</span>
<span style="left:492.68px;top:270.39px;color:#489a72;">0.481 W</span>
<span style="left:568.40px;top:270.39px;color:#4f4f4f;">56.41 mWh</span>
<span style="left:63.60px;top:283.01px;color:#489a72;">GPU SRAM (SLC)</span>
<span style="left:492.68px;top:283.01px;color:#489a72;">0.000 W</span>
<span style="left:574.71px;top:283.01px;color:#4f4f4f;">0.00 mWh</span>
<span style="left:63.60px;top:295.62px;color:#489a72;">Media Engine</span>
<span style="left:492.68px;top:295.62px;color:#489a72;">0.012 W</span>
<span style="left:574.71px;top:295.62px;color:#4f4f4f;">1.34 mWh</span>
<span style="left:63.60px;top:308.24px;color:#489a72;">Camera (ISP)</span>
<span style="left:492.68px;top:308.24px;color:#489a72;">0.008 W</span>
<span style="left:574.71px;top:308.24px;color:#4f4f4f;">0.56 mWh</span>
<span style="left:63.60px;top:320.85px;color:#e3b945;">Fabric</span>
<span class="b" style="left:492.68px;top:320.85px;color:#e3b945;">1.791 W</span>
<span style="left:562.09px;top:320.85px;color:#4f4f4f;">220.96 mWh</span>
<span class="b" style="left:57.29px;top:333.46px;color:#4aa87a;">SSD (APPLE SSD AP8192Z, Apple Fabric)</span>
<span style="left:372.79px;top:333.46px;color:#4f4f4f;">33°C (32–34)</span>
<span style="left:486.37px;top:333.46px;color:#489a72;">≈0.031 W</span>
<span style="left:568.40px;top:333.46px;color:#4f4f4f;">≈2.43 mWh</span>
<span style="left:63.60px;top:346.08px;color:#489a72;">Controller</span>
<span style="left:372.79px;top:346.08px;color:#4f4f4f;">33°C (32–34)</span>
<span style="left:76.22px;top:358.69px;color:#489a72;">NAND Flash</span>
<span style="left:372.79px;top:358.69px;color:#4f4f4f;">48°C (46–49)</span>
<span class="b" style="left:82.53px;top:371.31px;color:#5585e6;">Read</span>
<span style="left:505.30px;top:371.31px;color:#5585e6;">0 B/s</span>
<span style="left:574.71px;top:371.31px;color:#4f4f4f;">120.2 MB</span>
<span class="b" style="left:82.53px;top:383.92px;color:#5585e6;">Write</span>
<span style="left:473.75px;top:383.92px;color:#5585e6;">642.5 KB/s</span>
<span style="left:574.71px;top:383.92px;color:#4f4f4f;">429.9 MB</span>
<span class="b" style="left:57.29px;top:396.53px;color:#4aa87a;">Display (31% brightness, 500/1600 nits)</span>
<span style="left:372.79px;top:396.53px;color:#4f4f4f;">31°C (27–35)</span>
<span style="left:492.68px;top:396.53px;color:#489a72;">0.452 W</span>
<span style="left:568.40px;top:396.53px;color:#4f4f4f;">35.07 mWh</span>
<span class="b" style="left:44.67px;top:409.15px;color:#4aa87a;">Keyboard (5% brightness)</span>
<span style="left:486.37px;top:409.15px;color:#489a72;">≈0.025 W</span>
<span style="left:568.40px;top:409.15px;color:#4f4f4f;">≈1.95 mWh</span>
<span style="left:57.29px;top:421.76px;color:#489a72;">Trackpad</span>
<span style="left:372.79px;top:421.76px;color:#4f4f4f;">45°C (45–46)</span>
<span class="b" style="left:44.67px;top:434.38px;color:#4aa87a;">Audio (off)</span>
<span style="left:486.37px;top:434.38px;color:#489a72;">≈0.000 W</span>
<span style="left:568.40px;top:434.38px;color:#4f4f4f;">≈2.11 mWh</span>
<span class="b" style="left:57.29px;top:446.99px;color:#4aa87a;">Fans</span>
<span style="left:486.37px;top:446.99px;color:#489a72;">≈0.059 W</span>
<span style="left:568.40px;top:446.99px;color:#4f4f4f;">≈4.50 mWh</span>
<span style="left:63.60px;top:459.60px;color:#489a72;">Fan 0 (2316/7826 RPM)</span>
<span style="left:486.37px;top:459.60px;color:#489a72;">≈0.026 W</span>
<span style="left:568.40px;top:459.60px;color:#4f4f4f;">≈1.99 mWh</span>
<span style="left:63.60px;top:472.22px;color:#489a72;">Fan 1 (2502/7826 RPM)</span>
<span style="left:486.37px;top:472.22px;color:#489a72;">≈0.033 W</span>
<span style="left:568.40px;top:472.22px;color:#4f4f4f;">≈2.51 mWh</span>
<span class="b" style="left:57.29px;top:484.83px;color:#4aa87a;">Peripherals</span>
<span style="left:486.37px;top:484.83px;color:#489a72;">≈0.058 W</span>
<span style="left:568.40px;top:484.83px;color:#4f4f4f;">≈4.04 mWh</span>
<span style="left:63.60px;top:497.45px;color:#489a72;">Thunderbolt/PCIe</span>
<span style="left:492.68px;top:497.45px;color:#489a72;">0.000 W</span>
<span style="left:574.71px;top:497.45px;color:#4f4f4f;">0.00 mWh</span>
<span style="left:76.22px;top:510.06px;color:#489a72;">Ethernet (en3)</span>
<span style="left:76.22px;top:522.67px;color:#489a72;">WiFi (en0, −52 dBm, 802.11ax, ch153 (5GHz))</span>
<span style="left:492.68px;top:522.67px;color:#489a72;">0.028 W</span>
<span style="left:574.71px;top:522.67px;color:#4f4f4f;">2.15 mWh</span>
<span style="left:82.53px;top:535.29px;color:#5585e6;">↓</span>
<span class="b" style="left:95.15px;top:535.29px;color:#5585e6;">Download</span>
<span style="left:480.06px;top:535.29px;color:#5585e6;">35.6 KB/s</span>
<span style="left:587.33px;top:535.29px;color:#4f4f4f;">7.5 MB</span>
<span style="left:82.53px;top:547.90px;color:#5585e6;">↑</span>
<span class="b" style="left:95.15px;top:547.90px;color:#5585e6;">Upload</span>
<span style="left:480.06px;top:547.90px;color:#5585e6;">15.8 KB/s</span>
<span style="left:587.33px;top:547.90px;color:#4f4f4f;">8.0 MB</span>
<span style="left:76.22px;top:560.52px;color:#489a72;">Bluetooth (3 devices)</span>
<span style="left:486.37px;top:560.52px;color:#489a72;">≈0.030 W</span>
<span style="left:568.40px;top:560.52px;color:#4f4f4f;">≈1.89 mWh</span>
<span style="left:63.60px;top:573.13px;color:#4f4f4f;">USB (no devices)</span>
<span class="b" style="left:38.36px;top:598.36px;color:#f24a46;">Software (filter: top 10 by total)</span>
<span style="left:492.68px;top:598.36px;color:#f24a46;">95.3 mW</span>
<span style="left:574.71px;top:598.36px;color:#4f4f4f;">5.43 mWh</span>
<span style="left:57.29px;top:610.97px;color:#489a72;">Preview (pid 44672, 449.3 MB)</span>
<span style="left:498.99px;top:610.97px;color:#489a72;">0.2 mW</span>
<span style="left:574.71px;top:610.97px;color:#4f4f4f;">2.68 mWh</span>
<span style="left:57.29px;top:623.59px;color:#489a72;">Cursor (pid 67669, 1.22 GB)</span>
<span style="left:498.99px;top:623.59px;color:#489a72;">0.4 mW</span>
<span style="left:574.71px;top:623.59px;color:#4f4f4f;">0.54 mWh</span>
<span class="b" style="left:63.60px;top:636.20px;color:#5585e6;">Disk Read</span>
<span style="left:505.30px;top:636.20px;color:#5585e6;">0 B/s</span>
<span style="left:581.02px;top:636.20px;color:#4f4f4f;">20.0 KB</span>
<span class="b" style="left:63.60px;top:648.81px;color:#5585e6;">Disk Write</span>
<span style="left:480.06px;top:648.81px;color:#5585e6;">79.2 KB/s</span>
<span style="left:581.02px;top:648.81px;color:#4f4f4f;">25.8 MB</span>
<span style="left:44.67px;top:661.43px;color:#b4c4dc;">macpow (pid 10342, 12.6 MB)</span>
<span style="left:498.99px;top:661.43px;color:#b4c4dc;">3.6 mW</span>
<span style="left:574.71px;top:661.43px;color:#4f4f4f;">0.31 mWh</span>
<span style="left:57.29px;top:674.04px;color:#489a72;">Paste (pid 5044, 299.8 MB)</span>
<span style="left:498.99px;top:674.04px;color:#489a72;">0.6 mW</span>
<span style="left:574.71px;top:674.04px;color:#4f4f4f;">0.30 mWh</span>
<span style="left:57.29px;top:686.66px;color:#489a72;">Mail (pid 92428, 223.0 MB)</span>
<span style="left:498.99px;top:686.66px;color:#489a72;">0.1 mW</span>
<span style="left:574.71px;top:686.66px;color:#4f4f4f;">0.28 mWh</span>
<span style="left:57.29px;top:699.27px;color:#489a72;">CursorUIViewService (pid 1271, 23.6 MB)</span>
<span style="left:498.99px;top:699.27px;color:#489a72;">0.3 mW</span>
<span style="left:574.71px;top:699.27px;color:#4f4f4f;">0.18 mWh</span>
<span style="left:57.29px;top:711.88px;color:#489a72;">Screen Sharing (pid 62195, 236.5 MB)</span>
<span style="left:498.99px;top:711.88px;color:#489a72;">0.3 mW</span>
<span style="left:574.71px;top:711.88px;color:#4f4f4f;">0.11 mWh</span>
<span style="left:6.81px;top:737.11px;color:#4f4f4f;color:#4c4c4c;">20000m</span>
<span style="left:6.81px;top:774.95px;color:#4f4f4f;color:#4c4c4c;">10000m</span>
<span style="left:6.81px;top:812.80px;color:#4f4f4f;color:#4c4c4c;">0mW</span>
<span style="left:50.98px;top:737.11px;color:#e4e4e4;"> CPU (18 cores, 15%)   2.357 W</span>
<span style="left:183.49px;top:737.11px;color:#e4e4e4;margin-top:-1.5px;-webkit-text-stroke:0.5px #e4e4e4;">—</span>
<span style="left:13.12px;top:825.41px;color:#cfa46a;">q</span>
<span style="left:25.74px;top:825.41px;color:#e4e4e4;">quit</span>
<span style="left:63.60px;top:825.41px;color:#cfa46a;">r</span>
<span style="left:76.22px;top:825.41px;color:#e4e4e4;">reset</span>
<span style="left:120.39px;top:825.41px;color:#cfa46a;">a</span>
<span style="left:133.01px;top:825.41px;color:#e4e4e4;">avg:0s</span>
<span style="left:183.49px;top:825.41px;color:#cfa46a;">l</span>
<span style="left:196.11px;top:825.41px;color:#e4e4e4;">250ms</span>
<span style="left:240.28px;top:825.41px;color:#cfa46a;">↑↓←→+−</span>
<span style="left:284.45px;top:825.41px;color:#e4e4e4;">tree</span>
<span style="left:322.31px;top:825.41px;color:#cfa46a;">space</span>
<span style="left:360.17px;top:825.41px;color:#e4e4e4;">pin</span>
<span style="left:410.65px;top:825.41px;color:#e4e4e4;">&lt;1W</span>
<span style="left:442.20px;top:825.41px;color:#e4e4e4;">&lt;5W</span>
<span style="left:473.75px;top:825.41px;color:#e4e4e4;">&lt;10W</span>
<span style="left:511.61px;top:825.41px;color:#e4e4e4;">≥10W</span>
</div>
</body></html>
